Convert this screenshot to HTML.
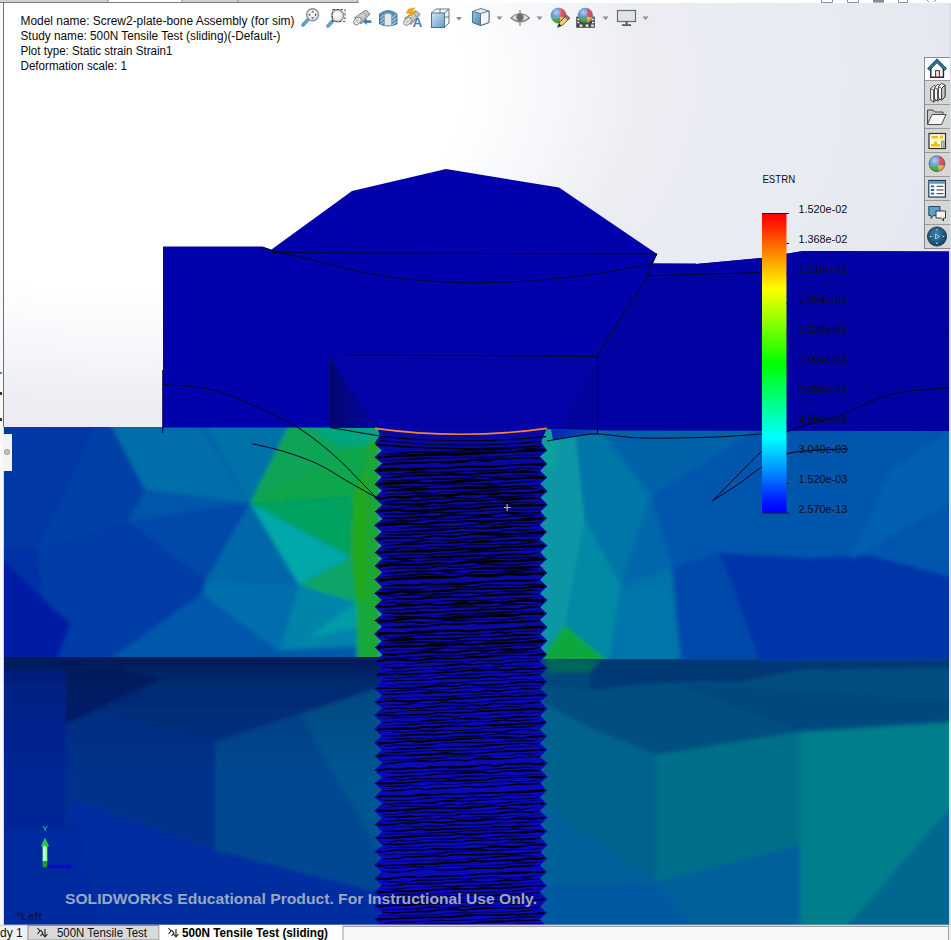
<!DOCTYPE html>
<html lang="en">
<head>
<meta charset="utf-8">
<title>SOLIDWORKS Simulation - Static strain plot</title>
<style>
html,body{margin:0;padding:0;}
body{width:951px;height:940px;overflow:hidden;background:#fff;font-family:"Liberation Sans",sans-serif;position:relative;}
#vp{position:absolute;left:0;top:0;width:951px;height:940px;display:block;}
svg text{font-family:"Liberation Sans",sans-serif;}
</style>
</head>
<body>
<svg id="vp" width="951" height="940" viewBox="0 0 951 940">
<defs>
<radialGradient id="bg" cx="120" cy="80" r="600" gradientUnits="userSpaceOnUse" gradientTransform="translate(120,80) scale(1.6,1) translate(-120,-80)">
<stop offset="0" stop-color="#ffffff"/>
<stop offset="0.35" stop-color="#ffffff"/>
<stop offset="0.45" stop-color="#f6f7fa"/>
<stop offset="0.55" stop-color="#ebedf3"/>
<stop offset="0.62" stop-color="#eaecf3"/>
<stop offset="0.83" stop-color="#e7e9f1"/>
<stop offset="1" stop-color="#e2e5ee"/>
</radialGradient>
<linearGradient id="gShade" x1="0" y1="657" x2="0" y2="830" gradientUnits="userSpaceOnUse"><stop offset="0" stop-color="#000018" stop-opacity="0.3"/><stop offset="0.2" stop-color="#000018" stop-opacity="0.13"/><stop offset="0.7" stop-color="#000018" stop-opacity="0"/><stop offset="1" stop-color="#000018" stop-opacity="0"/></linearGradient>
<filter id="soft" x="-5%" y="-5%" width="110%" height="110%"><feGaussianBlur stdDeviation="2"/></filter>
<filter id="soft2" x="-5%" y="-5%" width="110%" height="110%"><feGaussianBlur stdDeviation="2.5"/></filter>
<clipPath id="cUL"><rect x="3.6" y="427" width="382" height="231"/></clipPath>
<clipPath id="cUR"><rect x="536" y="429" width="413" height="232"/></clipPath>
<clipPath id="cLL"><rect x="3.6" y="657" width="382" height="268"/></clipPath>
<clipPath id="cLR"><rect x="536" y="659" width="413" height="266"/></clipPath>
</defs>
<rect x="0" y="0" width="951" height="940" fill="#ffffff"/>
<rect x="4" y="3" width="945" height="922" fill="url(#bg)"/>
<g clip-path="url(#cUL)"><g filter="url(#soft)">
<rect x="-5" y="420" width="400" height="245" fill="rgb(0,66,167)"/>
<polygon points="0.0,425.0 96.0,425.0 38.0,548.0 0.0,548.0" fill="rgb(0,56,164)" />
<polygon points="96.0,425.0 111.0,425.0 145.0,490.0 128.0,521.0 38.0,548.0" fill="rgb(0,64,167)" />
<polygon points="111.0,425.0 199.0,425.0 250.0,503.0 145.0,490.0" fill="rgb(0,110,168)" />
<polygon points="199.0,425.0 289.0,425.0 250.0,503.0" fill="rgb(0,114,168)" />
<polygon points="199.0,425.0 206.0,425.0 250.0,503.0 247.0,500.0" fill="rgb(0,98,170)" />
<polygon points="145.0,490.0 250.0,503.0 128.0,521.0" fill="rgb(0,86,170)" />
<polygon points="128.0,521.0 250.0,503.0 206.0,580.0" fill="rgb(0,72,168)" />
<polygon points="128.0,521.0 206.0,580.0 202.0,594.0 38.0,548.0" fill="rgb(0,62,166)" />
<polygon points="0.0,548.0 38.0,548.0 42.0,597.0 71.0,624.0 0.0,557.0" fill="rgb(0,48,165)" />
<polygon points="0.0,557.0 71.0,624.0 57.0,660.0 0.0,660.0" fill="rgb(2,30,165)" />
<polygon points="38.0,548.0 202.0,594.0 109.0,660.0 57.0,660.0 71.0,624.0 42.0,597.0" fill="rgb(0,60,166)" />
<polygon points="109.0,660.0 202.0,594.0 280.0,652.0 280.0,660.0" fill="rgb(0,88,172)" />
<polygon points="250.0,503.0 299.0,585.0 206.0,580.0" fill="rgb(0,104,170)" />
<polygon points="206.0,580.0 299.0,585.0 280.0,652.0 202.0,594.0" fill="rgb(0,110,172)" />
<polygon points="250.0,503.0 351.0,557.0 299.0,585.0" fill="rgb(6,168,170)" />
<polygon points="250.0,503.0 353.0,496.0 351.0,557.0" fill="rgb(6,162,94)" />
<polygon points="299.0,585.0 351.0,557.0 357.0,660.0 280.0,652.0" fill="rgb(2,140,170)" />
<polygon points="299.0,585.0 356.0,600.0 357.0,660.0 280.0,652.0" fill="rgb(2,132,170)" />
<polygon points="299.0,585.0 351.0,557.0 356.7,603.0" fill="rgb(10,164,104)" />
<polygon points="309.0,637.0 355.6,603.0 356.7,628.0" fill="rgb(4,156,168)" />
<polygon points="280.0,650.0 357.0,646.0 357.0,660.0 280.0,660.0" fill="rgb(0,90,170)" />
<polygon points="289.0,425.0 335.0,425.0 368.0,441.0 364.0,470.0 353.0,496.0 250.0,503.0" fill="rgb(12,166,76)" />
<polygon points="289.0,425.0 357.0,445.0 250.0,503.0" fill="rgb(8,164,88)" />
<polygon points="304.0,425.0 375.0,425.0 375.0,446.0 340.0,447.0" fill="rgb(6,166,124)" />
<polygon points="335.0,425.0 385.0,425.0 385.0,440.0 357.0,445.0" fill="rgb(6,166,128)" />
<polygon points="368.0,441.0 385.0,440.0 385.0,660.0 357.0,660.0 356.0,600.0 351.0,557.0 353.0,496.0 364.0,470.0" fill="rgb(36,168,26)" />
<polygon points="357.0,600.0 385.0,600.0 385.0,660.0 357.0,660.0" fill="rgb(24,168,60)" />
<polygon points="366.0,445.0 385.0,440.0 385.0,660.0 368.0,660.0" fill="rgb(30,166,56)" />
</g></g>
<g clip-path="url(#cUR)"><g filter="url(#soft)">
<rect x="522" y="425" width="440" height="240" fill="rgb(0,86,172)"/>
<polygon points="597.0,427.0 760.0,427.0 651.0,495.0" fill="rgb(0,100,170)" />
<polygon points="651.0,495.0 760.0,427.0 955.0,427.0 955.0,545.0 869.0,555.0 811.0,558.0 720.0,553.0 672.0,569.0" fill="rgb(0,86,172)" />
<polygon points="672.0,569.0 720.0,553.0 811.0,558.0 869.0,555.0 955.0,578.0 955.0,662.0 681.0,662.0" fill="rgb(0,54,170)" />
<polygon points="955.0,427.0 955.0,500.0 850.0,560.0 890.0,470.0" fill="rgb(2,94,176)" />
<polygon points="651.0,495.0 672.0,569.0 621.0,586.0" fill="rgb(0,104,170)" />
<polygon points="621.0,586.0 672.0,569.0 681.0,662.0 609.0,662.0" fill="rgb(0,116,170)" />
<polygon points="672.0,569.0 720.0,553.0 760.0,662.0 681.0,662.0" fill="rgb(0,74,170)" />
<polygon points="575.0,427.0 597.0,427.0 651.0,495.0 621.0,586.0 585.0,540.0 585.0,520.0" fill="rgb(0,116,168)" />
<polygon points="585.0,520.0 621.0,586.0 609.0,662.0 565.0,625.0" fill="rgb(2,138,166)" />
<polygon points="538.0,427.0 575.0,427.0 585.0,520.0 565.0,625.0 538.0,662.0" fill="rgb(8,150,166)" />
<polygon points="565.0,625.0 538.0,662.0 609.0,662.0" fill="rgb(14,168,62)" />
<polygon points="538.0,427.0 560.0,427.0 556.0,470.0 538.0,470.0" fill="rgb(10,160,156)" />
</g></g>
<g clip-path="url(#cLL)"><g filter="url(#soft)">
<rect x="-5" y="650" width="400" height="285" fill="rgb(0,48,146)"/>
<polygon points="0.0,650.0 66.0,650.0 66.0,830.0 0.0,935.0" fill="rgb(0,38,150)" />
<polygon points="66.0,650.0 390.0,650.0 390.0,684.0 215.0,742.0 66.0,700.0" fill="rgb(0,50,130)" />
<polygon points="66.0,700.0 215.0,742.0 215.0,850.0 75.0,800.0" fill="rgb(0,50,140)" />
<polygon points="215.0,742.0 390.0,684.0 390.0,895.0 215.0,850.0" fill="rgb(0,72,146)" />
<polygon points="300.0,715.0 390.0,684.0 390.0,870.0" fill="rgb(0,86,146)" />
<polygon points="215.0,850.0 390.0,895.0 390.0,935.0 100.0,935.0 75.0,800.0" fill="rgb(0,46,160)" />
<polygon points="0.0,830.0 66.0,830.0 75.0,800.0 100.0,935.0 0.0,935.0" fill="rgb(0,42,160)" />
<polygon points="-5.0,650.0 395.0,650.0 395.0,672.0 -5.0,670.0" fill="rgb(0,42,120)" />
<polygon points="66.0,660.0 164.0,678.0 66.0,724.0" fill="rgb(0,34,112)" />
<rect x="0" y="655" width="395" height="180" fill="url(#gShade)"/>
</g></g>
<g clip-path="url(#cLR)"><g filter="url(#soft)">
<rect x="522" y="650" width="440" height="285" fill="rgb(0,102,140)"/>
<polygon points="535.0,650.0 955.0,650.0 955.0,722.0 800.0,732.0 656.0,755.0 590.0,728.0 535.0,700.0" fill="rgb(0,80,128)" />
<polygon points="669.0,682.0 955.0,700.0 955.0,722.0 800.0,732.0" fill="rgb(0,72,126)" />
<polygon points="591.0,659.0 955.0,659.0 955.0,668.0 800.0,670.0 740.0,682.0 669.0,682.0 591.0,690.0" fill="rgb(0,56,118)" />
<polygon points="535.0,659.0 591.0,659.0 591.0,690.0 535.0,684.0" fill="rgb(0,70,122)" />
<polygon points="535.0,700.0 590.0,728.0 656.0,755.0 656.0,880.0 535.0,800.0" fill="rgb(0,100,142)" />
<polygon points="656.0,755.0 800.0,732.0 800.0,845.0 656.0,882.0" fill="rgb(0,112,138)" />
<polygon points="800.0,732.0 955.0,722.0 955.0,803.0 846.0,927.0 800.0,927.0" fill="rgb(0,126,140)" />
<polygon points="955.0,803.0 846.0,927.0 955.0,927.0" fill="rgb(0,104,142)" />
<polygon points="535.0,800.0 656.0,882.0 800.0,845.0 800.0,935.0 535.0,935.0" fill="rgb(0,96,154)" />
<polygon points="535.0,885.0 656.0,882.0 700.0,935.0 535.0,935.0" fill="rgb(0,90,162)" />
<polygon points="547.0,659.0 600.0,661.0 590.0,672.0 547.0,672.0" fill="rgb(4,104,84)" />
</g></g>
<circle cx="379.8" cy="450.4" r="2.3" fill="rgb(24,170,160)" opacity="0.75"/>
<circle cx="379.8" cy="464.0" r="2.3" fill="rgb(24,170,160)" opacity="0.75"/>
<circle cx="542.6" cy="470.8" r="2.2" fill="rgb(40,120,190)" opacity="0.6"/>
<circle cx="379.8" cy="477.6" r="2.3" fill="rgb(24,170,160)" opacity="0.75"/>
<circle cx="542.6" cy="484.4" r="2.2" fill="rgb(40,120,190)" opacity="0.6"/>
<circle cx="379.8" cy="491.2" r="2.3" fill="rgb(24,170,160)" opacity="0.75"/>
<circle cx="379.8" cy="518.4" r="2.3" fill="rgb(24,170,160)" opacity="0.75"/>
<circle cx="542.6" cy="525.2" r="2.2" fill="rgb(40,120,190)" opacity="0.6"/>
<circle cx="379.8" cy="532.0" r="2.3" fill="rgb(24,170,160)" opacity="0.75"/>
<circle cx="379.8" cy="545.6" r="2.3" fill="rgb(24,170,160)" opacity="0.75"/>
<circle cx="379.8" cy="559.2" r="2.3" fill="rgb(24,170,160)" opacity="0.75"/>
<circle cx="542.6" cy="566.0" r="2.2" fill="rgb(40,120,190)" opacity="0.6"/>
<circle cx="379.8" cy="613.6" r="2.3" fill="rgb(24,170,160)" opacity="0.75"/>
<circle cx="379.8" cy="627.2" r="2.3" fill="rgb(24,170,160)" opacity="0.75"/>
<circle cx="542.6" cy="634.0" r="2.2" fill="rgb(40,120,190)" opacity="0.6"/>
<circle cx="379.8" cy="640.8" r="2.3" fill="rgb(24,170,160)" opacity="0.75"/>
<circle cx="542.6" cy="647.6" r="2.2" fill="rgb(40,120,190)" opacity="0.6"/>
<circle cx="379.8" cy="654.4" r="2.3" fill="rgb(24,170,160)" opacity="0.75"/>
<defs><clipPath id="cSc"><rect x="370" y="426" width="182" height="499"/></clipPath><linearGradient id="gSc" x1="0" y1="428" x2="0" y2="925" gradientUnits="userSpaceOnUse"><stop offset="0" stop-color="rgb(8,8,160)"/><stop offset="0.45" stop-color="rgb(10,10,170)"/><stop offset="0.5" stop-color="rgb(10,10,180)"/><stop offset="1" stop-color="rgb(10,10,188)"/></linearGradient></defs>
<g clip-path="url(#cSc)">
<polygon points="378.0,428.0 379.5,436.0 374.4,443.6 381.8,450.6 374.6,457.2 382.0,463.3 374.1,470.8 381.5,476.9 374.5,484.4 381.9,490.6 374.7,498.0 382.1,504.9 375.1,511.6 382.5,519.0 374.2,525.2 381.6,531.7 374.3,538.8 381.7,545.8 374.6,552.4 382.0,558.5 374.8,566.0 382.2,572.5 374.6,579.6 382.0,586.9 374.3,593.2 381.7,600.0 374.8,606.8 382.2,614.4 374.5,620.4 381.9,626.6 374.1,634.0 381.5,641.2 375.0,647.6 382.4,654.7 374.7,661.2 382.1,668.5 374.6,674.8 382.0,680.9 374.7,688.4 382.1,695.7 374.5,702.0 381.9,708.0 374.3,715.6 381.7,721.7 374.2,729.2 381.6,735.8 374.2,742.8 381.6,749.7 374.9,756.4 382.3,762.8 374.5,770.0 381.9,777.5 374.3,783.6 381.7,790.0 374.7,797.2 382.1,803.2 374.5,810.8 381.9,818.3 374.6,824.4 382.0,831.5 375.0,838.0 382.4,845.4 374.5,851.6 381.9,857.8 374.2,865.2 381.6,871.5 374.4,878.8 381.8,884.8 374.2,892.4 381.6,898.4 374.7,906.0 382.1,912.4 374.5,919.6 381.9,927.0 374.6,933.2 382.0,939.3 374.4,946.8 381.8,954.1 540.0,959.9 547.1,953.6 540.2,946.2 547.3,940.0 539.8,934.0 546.9,926.4 539.8,919.4 546.9,912.8 540.1,906.6 547.2,899.2 539.8,891.8 546.9,885.6 539.8,878.3 546.9,872.0 540.1,865.4 547.2,858.4 540.5,852.1 547.6,844.8 540.3,837.3 547.4,831.2 540.3,824.7 547.4,817.6 540.0,810.7 547.1,804.0 539.9,797.2 547.0,790.4 540.6,783.0 547.7,776.8 540.6,769.9 547.7,763.2 540.1,757.0 547.2,749.6 539.9,743.4 547.0,736.0 539.8,729.6 546.9,722.4 540.4,715.5 547.5,708.8 540.7,701.7 547.8,695.2 540.4,688.7 547.5,681.6 540.2,675.5 547.3,668.0 540.0,661.4 547.1,654.4 540.4,647.7 547.5,640.8 540.5,634.0 547.6,627.2 540.0,619.8 547.1,613.6 540.3,607.4 547.4,600.0 540.0,593.5 547.1,586.4 540.1,579.7 547.2,572.8 539.8,565.5 546.9,559.2 540.3,552.2 547.4,545.6 539.8,539.3 546.9,532.0 539.7,524.9 546.8,518.4 540.6,511.4 547.7,504.8 540.5,497.6 547.6,491.2 540.1,483.7 547.2,477.6 540.1,470.8 547.2,464.0 539.9,456.5 547.0,450.4 541.0,442.0 547.0,428.0" fill="url(#gSc)" />


<polygon points="383.0,454.2 401.9,452.4 414.2,451.0 432.9,451.6 452.3,450.8 471.2,448.8 482.4,448.6 491.8,449.7 501.2,447.9 510.3,448.7 519.5,447.3 534.1,447.9 539.2,446.7 539.2,447.4 534.1,449.3 519.5,448.2 510.3,449.7 501.2,450.0 491.8,451.0 482.4,450.5 471.2,450.7 452.3,452.2 432.9,453.5 414.2,452.7 401.9,454.3 383.0,454.7" fill="rgb(0,0,36)" />
<polygon points="377.6,456.8 396.8,454.9 411.9,454.0 422.9,453.8 436.6,452.5 444.8,453.0 451.5,452.7 470.6,451.7 485.5,451.6 498.9,451.6 517.5,450.6 529.7,448.7 544.3,448.8 544.3,451.3 529.7,451.9 517.5,452.6 498.9,453.3 485.5,454.3 470.6,455.1 451.5,456.1 444.8,455.5 436.6,455.9 422.9,456.2 411.9,456.8 396.8,457.1 377.6,458.8" fill="rgb(0,0,8)" />
<polygon points="374.3,457.2 380.6,455.7 380.6,458.6" fill="rgb(0,0,8)" />
<polygon points="547.6,450.4 541.3,449.0 541.3,451.9" fill="rgb(0,0,8)" />
<polygon points="382.0,464.0 397.9,462.1 411.7,461.8 422.4,461.7 435.6,460.9 449.4,460.9 466.1,459.9 473.9,458.8 487.7,459.3 497.4,458.1 507.5,458.3 524.1,457.3 537.2,457.5 540.2,458.2 540.2,458.7 537.2,458.9 524.1,458.6 507.5,459.6 497.4,459.5 487.7,462.0 473.9,461.1 466.1,462.8 449.4,463.4 435.6,463.0 422.4,463.8 411.7,463.9 397.9,464.4 382.0,465.0" fill="rgb(0,0,14)" />
<polygon points="383.0,460.2 398.1,459.2 406.4,458.5 424.4,457.3 443.5,457.7 452.9,456.7 471.7,456.7 483.4,456.6 496.2,456.6 515.6,454.6 532.9,454.8 539.2,453.5 539.2,454.0 532.9,455.6 515.6,455.3 496.2,457.4 483.4,458.5 471.7,457.5 452.9,458.4 443.5,458.5 424.4,458.9 406.4,460.2 398.1,460.2 383.0,460.7" fill="rgb(0,0,36)" />
<polygon points="377.6,468.4 394.7,467.7 404.6,468.5 413.1,467.8 431.5,467.3 445.4,467.1 461.0,465.9 468.7,465.4 475.9,465.5 491.4,465.7 503.4,464.9 510.9,464.5 529.5,463.6 544.3,463.3 544.3,462.4 544.3,465.0 544.3,466.0 529.5,465.2 510.9,466.1 503.4,466.8 491.4,467.9 475.9,467.7 468.7,467.4 461.0,467.8 445.4,469.2 431.5,469.2 413.1,471.2 404.6,470.8 394.7,471.0 377.6,471.7" fill="rgb(0,0,8)" />
<polygon points="374.3,470.8 380.6,469.3 380.6,472.2" fill="rgb(0,0,8)" />
<polygon points="547.6,464.0 541.3,462.6 541.3,465.5" fill="rgb(0,0,8)" />
<polygon points="382.0,477.6 400.7,475.8 408.5,475.0 425.7,473.8 437.8,474.2 450.7,472.8 468.1,473.7 479.7,472.5 492.8,471.9 508.2,471.0 527.5,470.0 538.4,471.8 540.2,470.4 540.2,471.4 538.4,472.8 527.5,472.9 508.2,473.0 492.8,473.9 479.7,474.2 468.1,476.1 450.7,475.5 437.8,475.7 425.7,476.4 408.5,476.5 400.7,477.6 382.0,478.4" fill="rgb(0,0,14)" />
<polygon points="383.0,473.9 394.1,473.2 400.6,473.5 412.1,471.7 424.8,471.0 437.8,471.9 446.9,471.3 460.0,470.5 466.6,471.0 476.5,469.8 484.2,469.9 495.9,469.6 502.9,469.3 509.7,469.0 520.1,467.5 529.7,467.7 539.2,468.4 539.2,468.9 529.7,468.6 520.1,468.4 509.7,470.1 502.9,471.0 495.9,471.1 484.2,471.8 476.5,471.3 466.6,471.9 460.0,472.3 446.9,473.3 437.8,472.7 424.8,472.8 412.1,473.8 400.6,474.8 394.1,474.9 383.0,474.6" fill="rgb(0,0,36)" />
<polygon points="383.0,480.0 397.6,480.3 413.0,479.2 425.9,478.7 432.4,478.2 449.3,478.1 465.5,477.6 478.5,476.1 492.0,476.6 507.1,475.9 514.4,474.5 530.5,474.7 539.2,475.0 539.2,475.4 530.5,476.3 514.4,475.6 507.1,476.6 492.0,477.7 478.5,477.1 465.5,478.4 449.3,479.7 432.4,479.9 425.9,479.9 413.0,481.3 397.6,481.3 383.0,480.4" fill="rgb(0,0,36)" />
<polygon points="377.6,483.2 390.8,481.6 403.4,481.5 415.9,480.9 424.0,482.5 442.1,481.1 451.2,480.7 470.4,478.6 489.1,479.2 495.8,477.6 508.2,478.1 525.4,476.8 544.3,475.9 544.3,479.1 525.4,479.1 508.2,480.3 495.8,480.1 489.1,480.8 470.4,482.0 451.2,483.7 442.1,483.7 424.0,484.3 415.9,483.6 403.4,484.2 390.8,485.1 377.6,485.4" fill="rgb(0,0,8)" />
<polygon points="374.3,484.4 380.6,482.9 380.6,485.8" fill="rgb(0,0,8)" />
<polygon points="547.6,477.6 541.3,476.2 541.3,479.1" fill="rgb(0,0,8)" />
<polygon points="382.0,490.6 388.5,490.0 404.8,488.2 422.2,487.8 430.3,488.0 448.8,487.8 464.6,486.3 482.8,486.6 493.1,485.6 504.4,486.1 516.0,485.7 535.5,484.9 540.2,485.0 540.2,485.8 535.5,486.3 516.0,487.0 504.4,488.3 493.1,488.5 482.8,489.3 464.6,489.2 448.8,489.4 430.3,489.7 422.2,490.7 404.8,490.9 388.5,491.1 382.0,491.3" fill="rgb(0,0,14)" />
<polygon points="383.0,487.0 390.1,486.1 408.7,486.3 416.8,486.1 429.5,485.4 440.4,484.6 450.8,484.4 466.9,483.5 486.1,482.8 496.0,483.1 511.0,481.9 521.4,481.5 535.2,480.7 539.2,482.3 539.2,482.6 535.2,481.4 521.4,482.7 511.0,483.3 496.0,484.5 486.1,484.9 466.9,484.6 450.8,485.3 440.4,485.4 429.5,486.3 416.8,488.3 408.7,487.3 390.1,487.9 383.0,487.4" fill="rgb(0,0,36)" />
<polygon points="383.0,495.1 397.7,493.8 415.4,492.1 424.7,492.6 434.7,492.9 444.5,491.0 456.2,490.9 468.5,491.1 487.4,489.8 504.9,489.0 522.7,487.3 529.5,487.3 536.4,488.5 539.2,487.6 539.2,488.0 536.4,489.1 529.5,489.4 522.7,489.2 504.9,490.5 487.4,491.7 468.5,492.9 456.2,492.6 444.5,491.9 434.7,493.9 424.7,494.5 415.4,494.2 397.7,494.5 383.0,495.6" fill="rgb(0,0,36)" />
<polygon points="377.6,497.4 392.4,495.9 408.0,496.1 415.9,495.3 423.3,494.7 436.6,494.5 450.7,493.7 462.3,493.3 471.7,492.8 486.0,493.1 492.6,492.5 503.0,492.1 515.5,492.3 534.5,491.4 544.3,489.4 544.3,492.5 534.5,493.4 515.5,494.5 503.0,494.1 492.6,495.5 486.0,495.1 471.7,495.2 462.3,495.0 450.7,497.1 436.6,496.6 423.3,497.7 415.9,497.0 408.0,499.1 392.4,498.0 377.6,500.0" fill="rgb(0,0,8)" />
<polygon points="374.3,498.0 380.6,496.5 380.6,499.4" fill="rgb(0,0,8)" />
<polygon points="547.6,491.2 541.3,489.8 541.3,492.7" fill="rgb(0,0,8)" />
<polygon points="382.0,503.8 392.3,502.8 411.2,503.1 424.2,502.6 433.1,501.7 442.5,501.9 454.4,499.9 469.6,500.2 488.4,499.6 496.8,498.5 508.4,498.1 517.7,497.3 536.8,497.6 540.2,498.7 540.2,499.6 536.8,498.7 517.7,500.2 508.4,501.0 496.8,500.2 488.4,501.1 469.6,502.1 454.4,502.3 442.5,504.5 433.1,503.2 424.2,505.5 411.2,505.6 392.3,505.6 382.0,504.2" fill="rgb(0,0,14)" />
<polygon points="383.0,502.0 390.1,500.7 402.8,499.8 414.1,500.2 432.6,498.1 441.6,498.2 452.8,496.8 471.0,497.9 477.9,498.1 489.7,496.0 506.8,496.3 523.3,495.1 530.3,494.8 537.2,495.9 539.2,495.5 539.2,496.1 537.2,496.3 530.3,496.2 523.3,496.2 506.8,498.4 489.7,497.4 477.9,498.8 471.0,499.5 452.8,498.7 441.6,499.3 432.6,499.9 414.1,501.8 402.8,500.9 390.1,502.4 383.0,502.3" fill="rgb(0,0,36)" />
<polygon points="383.0,508.7 399.5,507.9 413.9,505.8 424.7,505.7 435.4,505.5 446.6,504.7 463.2,504.4 470.8,504.5 479.8,502.7 496.1,502.6 505.8,502.2 513.2,502.0 520.1,501.9 533.8,502.4 539.2,501.5 539.2,502.0 533.8,503.5 520.1,502.8 513.2,503.1 505.8,504.0 496.1,504.2 479.8,504.7 470.8,506.2 463.2,506.3 446.6,506.4 435.4,506.6 424.7,507.4 413.9,506.7 399.5,509.0 383.0,509.4" fill="rgb(0,0,36)" />
<polygon points="377.6,509.7 397.0,509.2 410.1,509.8 419.6,509.5 436.6,508.7 451.6,506.7 471.0,507.8 478.8,506.4 491.5,505.4 508.6,504.8 526.1,503.9 544.3,504.3 544.3,506.3 526.1,506.7 508.6,506.8 491.5,507.8 478.8,509.2 471.0,509.6 451.6,509.8 436.6,511.2 419.6,511.9 410.1,512.6 397.0,511.1 377.6,511.9" fill="rgb(0,0,8)" />
<polygon points="374.3,511.6 380.6,510.1 380.6,513.0" fill="rgb(0,0,8)" />
<polygon points="547.6,504.8 541.3,503.4 541.3,506.3" fill="rgb(0,0,8)" />
<polygon points="382.0,518.4 388.6,517.0 399.4,517.6 414.7,516.3 423.6,515.2 434.2,516.3 443.3,514.2 460.2,514.2 473.8,514.5 481.1,514.1 488.9,513.9 500.6,512.5 514.2,512.1 529.0,512.7 536.7,512.0 540.2,511.9 540.2,512.4 536.7,513.1 529.0,514.0 514.2,514.5 500.6,513.7 488.9,515.9 481.1,516.0 473.8,516.5 460.2,515.4 443.3,516.7 434.2,518.2 423.6,518.0 414.7,518.2 399.4,519.4 388.6,518.5 382.0,519.1" fill="rgb(0,0,14)" />
<polygon points="383.0,513.8 396.3,513.2 414.8,513.0 422.7,511.9 435.6,511.8 452.6,511.9 471.6,510.4 480.7,510.2 488.8,510.2 507.6,508.7 526.8,509.7 539.2,508.6 539.2,509.3 526.8,510.4 507.6,510.5 488.8,511.1 480.7,511.7 471.6,511.5 452.6,513.9 435.6,513.1 422.7,513.8 414.8,514.9 396.3,515.3 383.0,514.6" fill="rgb(0,0,36)" />
<polygon points="383.0,521.8 400.4,519.7 408.4,520.6 422.7,519.0 436.4,518.5 451.0,518.6 461.5,517.9 473.5,516.6 487.5,516.0 499.6,517.0 514.6,515.1 526.9,514.8 539.1,514.6 539.2,516.2 539.2,516.9 539.1,515.3 526.9,517.0 514.6,516.5 499.6,518.4 487.5,517.8 473.5,518.2 461.5,519.3 451.0,519.4 436.4,519.4 422.7,520.4 408.4,522.0 400.4,521.6 383.0,522.3" fill="rgb(0,0,36)" />
<polygon points="377.6,522.9 394.7,522.5 403.7,522.2 423.0,523.2 435.9,521.2 454.8,521.0 473.2,519.9 481.9,520.4 498.6,520.2 517.2,519.3 524.6,518.0 535.6,517.1 544.3,517.4 544.3,520.1 535.6,520.4 524.6,520.9 517.2,521.1 498.6,522.1 481.9,523.4 473.2,521.8 454.8,522.7 435.9,523.8 423.0,525.2 403.7,524.8 394.7,525.7 377.6,526.3" fill="rgb(0,0,8)" />
<polygon points="374.3,525.2 380.6,523.7 380.6,526.6" fill="rgb(0,0,8)" />
<polygon points="547.6,518.4 541.3,517.0 541.3,519.9" fill="rgb(0,0,8)" />
<polygon points="382.0,531.6 400.0,531.1 407.8,530.7 427.2,529.0 441.9,528.6 453.6,528.2 470.4,526.9 480.4,527.3 499.7,526.0 513.7,525.3 524.9,526.0 540.2,524.6 540.2,525.2 524.9,527.3 513.7,527.0 499.7,528.8 480.4,529.3 470.4,528.4 453.6,529.4 441.9,531.0 427.2,532.0 407.8,532.4 400.0,532.4 382.0,532.2" fill="rgb(0,0,14)" />
<polygon points="383.0,528.9 394.1,527.4 403.6,527.3 417.6,526.1 431.8,525.5 441.0,526.2 455.6,526.1 468.2,524.6 476.5,524.1 495.2,524.3 504.8,522.8 513.3,522.3 521.0,522.6 535.8,522.3 539.2,521.7 539.2,522.1 535.8,523.4 521.0,524.1 513.3,523.3 504.8,525.0 495.2,525.0 476.5,524.8 468.2,526.0 455.6,526.9 441.0,527.3 431.8,527.6 417.6,527.8 403.6,528.8 394.1,528.1 383.0,529.3" fill="rgb(0,0,36)" />
<polygon points="383.0,534.8 390.1,534.0 408.2,533.8 424.9,533.6 440.7,532.5 447.3,532.6 464.7,530.9 480.9,531.9 493.5,531.4 509.6,529.5 522.0,529.3 531.4,529.5 539.2,529.7 539.2,530.1 531.4,530.5 522.0,531.4 509.6,530.5 493.5,532.1 480.9,532.9 464.7,532.6 447.3,534.1 440.7,533.9 424.9,534.7 408.2,535.7 390.1,535.6 383.0,535.1" fill="rgb(0,0,36)" />
<polygon points="377.6,537.8 387.2,537.1 405.5,537.0 420.2,536.9 435.7,534.8 450.9,535.5 470.1,533.7 482.7,532.3 500.1,532.7 515.7,532.9 533.3,531.7 544.3,531.2 544.3,534.4 533.3,534.0 515.7,534.7 500.1,535.7 482.7,535.3 470.1,535.3 450.9,537.8 435.7,536.6 420.2,538.8 405.5,538.8 387.2,539.1 377.6,540.6" fill="rgb(0,0,8)" />
<polygon points="374.3,538.8 380.6,537.3 380.6,540.2" fill="rgb(0,0,8)" />
<polygon points="547.6,532.0 541.3,530.6 541.3,533.5" fill="rgb(0,0,8)" />
<polygon points="382.0,545.8 400.1,543.8 407.4,542.6 425.2,542.5 443.6,542.4 462.4,541.1 470.3,541.6 479.5,540.0 487.4,540.1 494.4,540.8 511.9,539.3 528.9,539.4 540.2,539.4 540.2,540.1 528.9,541.2 511.9,541.3 494.4,542.0 487.4,542.8 479.5,542.9 470.3,543.4 462.4,542.9 443.6,543.7 425.2,544.3 407.4,545.2 400.1,545.2 382.0,546.6" fill="rgb(0,0,14)" />
<polygon points="383.0,542.0 400.7,541.6 408.4,541.4 425.5,539.1 434.3,539.7 440.8,539.8 449.9,539.2 466.3,538.6 485.5,537.3 492.1,536.7 505.0,535.6 517.9,535.5 534.7,535.1 539.2,535.8 539.2,536.3 534.7,536.5 517.9,536.5 505.0,537.7 492.1,538.7 485.5,538.6 466.3,540.3 449.9,541.0 440.8,540.6 434.3,540.6 425.5,540.9 408.4,542.6 400.7,542.6 383.0,542.4" fill="rgb(0,0,36)" />
<polygon points="383.0,548.2 392.5,548.3 405.0,546.8 418.4,547.8 434.7,545.8 451.0,545.7 465.9,544.6 477.0,544.3 487.7,544.4 496.2,543.7 513.7,543.8 528.8,541.5 539.2,541.9 539.2,542.4 528.8,543.6 513.7,545.6 496.2,544.7 487.7,545.4 477.0,545.4 465.9,545.6 451.0,547.7 434.7,547.0 418.4,548.8 405.0,548.2 392.5,549.9 383.0,548.6" fill="rgb(0,0,36)" />
<polygon points="377.6,551.0 396.9,550.6 413.7,550.0 429.8,549.1 441.9,548.4 451.0,548.7 465.8,546.9 473.6,547.7 482.8,547.0 494.4,546.7 501.3,546.3 513.0,546.4 529.8,544.7 544.3,544.8 544.3,547.6 529.8,547.8 513.0,548.2 501.3,548.6 494.4,549.6 482.8,550.3 473.6,550.9 465.8,550.0 451.0,551.2 441.9,551.1 429.8,552.5 413.7,552.4 396.9,552.5 377.6,553.8" fill="rgb(0,0,8)" />
<polygon points="374.3,552.4 380.6,550.9 380.6,553.8" fill="rgb(0,0,8)" />
<polygon points="547.6,545.6 541.3,544.2 541.3,547.1" fill="rgb(0,0,8)" />
<polygon points="382.0,559.8 391.8,558.1 403.8,557.4 416.2,557.2 430.8,556.3 442.6,556.1 457.9,555.1 476.4,554.6 485.3,555.1 500.3,553.9 517.0,553.6 528.5,553.4 540.2,551.9 540.2,552.5 528.5,555.2 517.0,555.1 500.3,555.8 485.3,556.7 476.4,556.5 457.9,557.8 442.6,558.3 430.8,558.5 416.2,558.6 403.8,560.3 391.8,559.6 382.0,560.3" fill="rgb(0,0,14)" />
<polygon points="383.0,555.1 389.7,555.2 401.6,554.6 413.6,554.2 429.2,554.2 440.2,552.8 450.2,553.0 459.6,551.7 475.7,550.5 494.5,550.2 507.8,549.8 517.2,549.4 534.1,549.0 539.2,549.9 539.2,550.2 534.1,549.5 517.2,550.7 507.8,551.1 494.5,552.1 475.7,552.4 459.6,553.2 450.2,554.4 440.2,554.8 429.2,555.4 413.6,555.2 401.6,556.0 389.7,556.8 383.0,555.4" fill="rgb(0,0,36)" />
<polygon points="383.0,561.6 393.4,562.1 406.2,559.7 418.2,561.0 433.0,559.5 448.1,558.6 459.3,558.9 477.9,558.6 495.5,556.6 502.7,557.1 520.0,556.5 538.3,556.6 539.2,555.6 539.2,556.2 538.3,557.4 520.0,558.5 502.7,559.0 495.5,558.6 477.9,560.5 459.3,559.8 448.1,560.5 433.0,560.4 418.2,562.0 406.2,561.9 393.4,562.8 383.0,562.3" fill="rgb(0,0,36)" />
<polygon points="377.6,564.4 391.0,562.9 407.1,563.4 419.3,563.0 437.3,562.2 451.0,563.1 461.0,561.5 470.5,560.1 478.8,560.6 491.7,559.4 499.0,560.0 511.6,560.6 520.0,559.4 532.8,557.9 544.3,557.9 544.3,560.5 532.8,561.3 520.0,562.2 511.6,562.3 499.0,562.5 491.7,563.0 478.8,564.1 470.5,562.9 461.0,564.4 451.0,564.8 437.3,564.6 419.3,566.3 407.1,566.1 391.0,566.2 377.6,567.7" fill="rgb(0,0,8)" />
<polygon points="374.3,566.0 380.6,564.5 380.6,567.4" fill="rgb(0,0,8)" />
<polygon points="547.6,559.2 541.3,557.8 541.3,560.7" fill="rgb(0,0,8)" />
<polygon points="382.0,573.2 395.3,571.9 411.8,570.4 421.1,570.2 433.2,570.7 445.2,569.3 458.9,569.2 476.2,568.1 486.5,566.7 503.8,567.0 515.5,566.6 528.6,566.1 538.6,566.3 540.2,566.3 540.2,567.2 538.6,567.4 528.6,568.4 515.5,569.5 503.8,569.4 486.5,569.6 476.2,569.3 458.9,570.5 445.2,572.1 433.2,571.9 421.1,572.6 411.8,572.2 395.3,573.7 382.0,574.1" fill="rgb(0,0,14)" />
<polygon points="383.0,569.3 398.2,567.8 410.6,567.3 427.0,566.9 434.9,565.8 443.7,565.7 450.7,566.5 467.3,566.2 485.6,563.8 500.7,563.9 512.0,564.5 529.2,563.1 539.2,563.3 539.2,563.7 529.2,563.9 512.0,565.9 500.7,566.0 485.6,565.1 467.3,567.5 450.7,568.1 443.7,566.6 434.9,567.3 427.0,569.0 410.6,568.7 398.2,569.1 383.0,569.7" fill="rgb(0,0,36)" />
<polygon points="383.0,576.2 389.7,576.0 396.3,575.0 411.7,574.0 419.7,573.2 438.8,574.0 446.4,572.0 464.2,573.2 472.4,571.4 479.2,570.8 495.0,571.4 504.7,570.4 520.7,569.8 529.6,568.8 536.8,569.5 539.2,570.1 539.2,570.5 536.8,570.3 529.6,570.7 520.7,571.5 504.7,572.0 495.0,572.2 479.2,572.8 472.4,573.2 464.2,574.0 446.4,573.7 438.8,574.8 419.7,575.4 411.7,576.1 396.3,576.8 389.7,576.7 383.0,576.9" fill="rgb(0,0,36)" />
<polygon points="377.6,578.8 389.1,578.2 405.8,576.7 424.6,576.0 441.3,575.6 455.2,576.0 465.5,574.2 472.8,574.3 491.9,574.0 507.6,572.0 524.8,572.7 535.7,572.4 544.3,572.1 544.3,575.3 535.7,574.6 524.8,576.0 507.6,575.3 491.9,577.4 472.8,577.1 465.5,576.3 455.2,578.2 441.3,579.0 424.6,579.0 405.8,580.0 389.1,580.4 377.6,582.1" fill="rgb(0,0,8)" />
<polygon points="374.3,579.6 380.6,578.1 380.6,581.0" fill="rgb(0,0,8)" />
<polygon points="547.6,572.8 541.3,571.4 541.3,574.3" fill="rgb(0,0,8)" />
<polygon points="382.0,586.1 397.4,584.1 415.8,584.6 426.8,582.6 434.4,584.0 448.1,582.5 465.0,582.8 474.1,581.6 490.3,580.8 508.9,579.6 518.5,579.7 532.9,579.4 540.2,579.3 540.2,579.8 532.9,581.2 518.5,581.9 508.9,582.1 490.3,582.3 474.1,583.9 465.0,584.9 448.1,585.3 434.4,585.6 426.8,585.2 415.8,586.6 397.4,586.6 382.0,586.6" fill="rgb(0,0,14)" />
<polygon points="383.0,589.0 390.9,588.4 405.6,588.4 422.3,588.5 430.9,586.6 445.1,586.4 456.1,585.3 469.4,586.4 476.1,585.9 483.1,584.3 502.5,584.5 520.2,584.7 533.0,583.4 539.2,584.2 539.2,584.8 533.0,584.7 520.2,585.8 502.5,585.4 483.1,585.9 476.1,588.0 469.4,587.8 456.1,586.9 445.1,587.2 430.9,587.6 422.3,589.6 405.6,590.4 390.9,590.3 383.0,589.7" fill="rgb(0,0,36)" />
<polygon points="377.6,592.2 389.2,591.2 401.5,590.5 410.1,590.6 429.2,590.4 448.6,589.0 457.9,588.2 464.9,588.4 474.8,588.4 485.8,587.5 504.1,587.7 522.3,586.9 539.7,584.3 544.3,584.4 544.3,587.9 539.7,587.7 522.3,588.9 504.1,589.4 485.8,589.4 474.8,590.3 464.9,590.2 457.9,590.5 448.6,592.1 429.2,592.6 410.1,594.1 401.5,592.4 389.2,594.8 377.6,595.2" fill="rgb(0,0,8)" />
<polygon points="374.3,593.2 380.6,591.7 380.6,594.6" fill="rgb(0,0,8)" />
<polygon points="547.6,586.4 541.3,585.0 541.3,587.9" fill="rgb(0,0,8)" />
<polygon points="382.0,600.0 399.8,598.1 417.8,597.9 426.1,596.2 438.5,596.4 446.2,596.0 464.8,596.5 482.2,594.4 496.9,593.7 509.3,592.8 520.2,592.4 537.4,593.7 540.2,593.4 540.2,594.0 537.4,594.6 520.2,595.2 509.3,595.8 496.9,596.6 482.2,596.5 464.8,598.3 446.2,597.7 438.5,598.3 426.1,599.0 417.8,600.1 399.8,599.5 382.0,600.5" fill="rgb(0,0,14)" />
<polygon points="383.0,595.4 392.1,595.5 403.4,593.9 422.7,594.6 442.2,593.1 460.7,592.3 468.5,592.1 478.8,592.4 496.9,591.2 504.2,590.3 520.1,590.6 530.4,589.5 539.2,590.5 539.2,591.2 530.4,591.1 520.1,591.7 504.2,591.9 496.9,592.0 478.8,594.2 468.5,593.1 460.7,593.8 442.2,595.2 422.7,595.6 403.4,595.9 392.1,596.4 383.0,596.1" fill="rgb(0,0,36)" />
<polygon points="383.0,603.0 392.1,602.1 399.5,602.7 415.5,600.9 427.3,601.5 443.2,600.4 450.4,600.3 467.5,599.5 478.3,599.7 495.8,598.7 513.5,598.3 526.4,597.4 533.1,596.9 539.2,597.0 539.2,597.6 533.1,598.1 526.4,599.5 513.5,599.1 495.8,600.0 478.3,600.9 467.5,601.4 450.4,601.2 443.2,601.7 427.3,602.2 415.5,602.1 399.5,604.0 392.1,603.1 383.0,603.7" fill="rgb(0,0,36)" />
<polygon points="377.6,604.4 384.4,606.1 403.4,603.8 412.9,604.3 421.7,603.2 429.6,602.7 439.3,604.1 456.4,602.3 463.3,601.2 471.1,602.7 486.7,600.7 495.7,601.0 502.4,601.1 516.7,600.0 530.7,599.2 544.0,599.5 544.3,599.4 544.3,602.6 544.0,602.7 530.7,601.7 516.7,602.1 502.4,604.3 495.7,603.4 486.7,604.0 471.1,605.1 463.3,604.4 456.4,605.4 439.3,606.0 429.6,605.5 421.7,605.6 412.9,606.5 403.4,606.4 384.4,607.8 377.6,607.8" fill="rgb(0,0,8)" />
<polygon points="374.3,606.8 380.6,605.3 380.6,608.2" fill="rgb(0,0,8)" />
<polygon points="547.6,600.0 541.3,598.6 541.3,601.5" fill="rgb(0,0,8)" />
<polygon points="382.0,612.5 399.5,612.5 406.7,612.2 419.9,611.3 438.9,611.4 457.5,610.0 467.3,609.7 479.3,608.4 494.0,608.6 505.2,607.8 518.6,608.2 526.0,606.4 538.2,606.2 540.2,607.8 540.2,608.6 538.2,607.3 526.0,608.8 518.6,609.9 505.2,609.8 494.0,610.2 479.3,611.3 467.3,611.4 457.5,611.7 438.9,612.7 419.9,614.1 406.7,614.6 399.5,615.1 382.0,613.0" fill="rgb(0,0,14)" />
<polygon points="383.0,610.3 395.6,609.4 409.0,608.5 417.4,608.2 425.5,607.5 433.8,607.6 444.1,607.6 455.9,606.1 466.1,605.7 475.8,606.0 483.4,606.6 497.0,605.7 514.4,603.2 528.9,604.0 539.2,603.6 539.2,604.1 528.9,604.7 514.4,605.2 497.0,606.7 483.4,607.7 475.8,607.1 466.1,607.2 455.9,608.1 444.1,608.3 433.8,608.9 425.5,608.6 417.4,609.4 409.0,610.1 395.6,610.8 383.0,610.6" fill="rgb(0,0,36)" />
<polygon points="383.0,617.1 390.9,616.5 400.3,615.9 419.3,615.9 435.4,615.3 443.9,614.3 454.8,613.1 465.9,613.2 481.2,612.6 495.7,612.1 513.2,611.1 530.4,611.0 539.2,610.4 539.2,610.9 530.4,612.2 513.2,612.5 495.7,613.4 481.2,614.6 465.9,614.5 454.8,615.2 443.9,615.9 435.4,616.0 419.3,616.8 400.3,617.7 390.9,617.8 383.0,617.7" fill="rgb(0,0,36)" />
<polygon points="377.6,619.4 389.1,619.8 399.8,617.7 416.5,617.1 434.1,617.0 447.1,616.8 459.3,615.5 468.2,615.5 478.7,615.6 487.1,614.4 501.0,613.5 515.1,614.0 522.7,612.8 541.2,612.4 544.3,612.3 544.3,615.6 541.2,615.1 522.7,615.1 515.1,616.6 501.0,617.0 487.1,617.2 478.7,617.9 468.2,618.2 459.3,619.0 447.1,620.0 434.1,619.6 416.5,618.8 399.8,621.1 389.1,621.8 377.6,622.7" fill="rgb(0,0,8)" />
<polygon points="374.3,620.4 380.6,618.9 380.6,621.8" fill="rgb(0,0,8)" />
<polygon points="547.6,613.6 541.3,612.2 541.3,615.1" fill="rgb(0,0,8)" />
<polygon points="382.0,627.0 401.0,625.9 413.9,625.0 426.1,625.2 440.7,623.4 460.2,623.1 471.1,622.4 484.5,622.3 501.6,620.7 510.3,621.8 521.0,620.3 540.2,620.2 540.2,619.8 540.2,620.4 540.2,621.1 521.0,622.9 510.3,623.0 501.6,623.7 484.5,624.5 471.1,623.9 460.2,625.2 440.7,625.1 426.1,627.1 413.9,628.0 401.0,628.4 382.0,627.5" fill="rgb(0,0,14)" />
<polygon points="383.0,622.9 397.1,622.1 412.3,621.3 421.4,622.1 434.3,621.9 448.0,619.4 458.0,619.6 472.9,619.5 486.3,618.9 505.8,618.9 519.7,617.5 531.6,617.4 539.2,618.1 539.2,618.6 531.6,618.1 519.7,618.8 505.8,620.5 486.3,619.7 472.9,620.5 458.0,621.4 448.0,621.3 434.3,622.7 421.4,623.7 412.3,622.8 397.1,623.0 383.0,623.5" fill="rgb(0,0,36)" />
<polygon points="377.6,632.2 389.8,631.9 404.4,632.3 414.1,630.5 421.2,630.7 439.8,630.1 457.4,629.6 468.0,630.2 486.2,628.9 503.3,627.9 513.7,627.6 528.1,625.8 544.3,626.1 544.3,628.2 528.1,629.0 513.7,629.3 503.3,630.3 486.2,630.8 468.0,632.4 457.4,631.6 439.8,632.1 421.2,633.8 414.1,633.9 404.4,634.4 389.8,634.2 377.6,635.7" fill="rgb(0,0,8)" />
<polygon points="374.3,634.0 380.6,632.5 380.6,635.4" fill="rgb(0,0,8)" />
<polygon points="547.6,627.2 541.3,625.8 541.3,628.7" fill="rgb(0,0,8)" />
<polygon points="382.0,641.1 391.0,638.9 401.2,638.4 410.8,637.7 417.7,638.6 432.8,638.0 443.8,637.9 452.3,637.6 468.0,636.4 475.7,636.5 485.7,636.7 503.1,635.0 511.2,634.0 523.5,633.8 540.2,634.4 540.2,635.0 523.5,636.2 511.2,636.6 503.1,637.1 485.7,638.1 475.7,638.1 468.0,638.0 452.3,639.9 443.8,639.6 432.8,639.4 417.7,640.2 410.8,640.6 401.2,641.3 391.0,641.4 382.0,641.6" fill="rgb(0,0,14)" />
<polygon points="383.0,636.8 390.6,637.0 399.4,636.4 417.0,634.8 427.7,633.9 442.8,634.7 450.7,633.7 464.5,634.0 475.7,633.8 488.7,633.0 499.1,631.1 506.4,632.1 517.0,630.9 526.4,630.6 534.5,630.6 539.2,630.2 539.2,630.6 534.5,631.5 526.4,631.6 517.0,631.7 506.4,633.8 499.1,633.2 488.7,634.0 475.7,635.0 464.5,635.1 450.7,635.4 442.8,636.0 427.7,635.7 417.0,636.0 399.4,638.4 390.6,638.7 383.0,637.2" fill="rgb(0,0,36)" />
<polygon points="383.0,644.6 391.8,642.5 409.2,641.5 423.2,641.1 439.0,642.0 448.8,641.3 460.9,640.6 476.3,639.7 487.4,640.2 493.9,639.7 511.2,638.6 527.8,638.0 538.1,636.9 539.2,637.7 539.2,638.2 538.1,637.7 527.8,639.4 511.2,640.6 493.9,641.5 487.4,641.6 476.3,640.5 460.9,642.5 448.8,642.6 439.0,642.9 423.2,643.1 409.2,643.4 391.8,643.6 383.0,645.1" fill="rgb(0,0,36)" />
<polygon points="377.6,646.1 396.2,645.2 404.3,644.4 420.7,645.2 427.8,643.8 443.4,643.2 460.4,643.0 470.3,643.7 483.9,642.4 503.0,641.9 517.8,641.6 531.4,640.4 541.1,639.5 544.3,640.7 544.3,642.5 541.1,642.7 531.4,643.2 517.8,643.5 503.0,644.6 483.9,644.7 470.3,645.6 460.4,645.2 443.4,646.6 427.8,646.5 420.7,647.2 404.3,647.4 396.2,647.4 377.6,648.6" fill="rgb(0,0,8)" />
<polygon points="374.3,647.6 380.6,646.1 380.6,649.0" fill="rgb(0,0,8)" />
<polygon points="547.6,640.8 541.3,639.4 541.3,642.3" fill="rgb(0,0,8)" />
<polygon points="382.0,654.6 392.3,652.9 403.4,653.0 412.6,652.2 419.9,651.3 430.1,650.2 439.1,651.2 454.8,651.1 467.1,649.8 475.0,649.5 485.8,649.5 498.4,648.7 509.6,648.3 518.3,649.1 525.7,647.9 532.3,648.1 540.2,647.1 540.2,648.1 532.3,649.7 525.7,650.6 518.3,650.6 509.6,651.0 498.4,650.2 485.8,652.2 475.0,650.7 467.1,651.4 454.8,653.5 439.1,653.6 430.1,653.0 419.9,653.4 412.6,654.2 403.4,654.4 392.3,655.9 382.0,655.1" fill="rgb(0,0,14)" />
<polygon points="383.0,650.7 394.3,649.4 408.0,649.8 419.3,649.4 436.6,647.7 446.2,647.4 453.2,647.6 467.1,647.7 481.7,646.7 498.9,646.3 514.6,644.6 532.8,644.6 539.2,644.3 539.2,644.8 532.8,645.7 514.6,646.3 498.9,647.6 481.7,648.7 467.1,648.4 453.2,648.6 446.2,648.2 436.6,649.9 419.3,650.4 408.0,650.6 394.3,650.5 383.0,651.2" fill="rgb(0,0,36)" />
<polygon points="383.0,658.1 400.2,657.1 418.5,656.6 427.1,655.6 437.5,654.5 449.7,655.3 463.6,654.3 474.6,652.9 483.6,652.5 491.2,653.2 501.9,651.5 514.4,651.6 533.6,651.2 539.2,651.5 539.2,652.0 533.6,652.3 514.4,653.2 501.9,653.2 491.2,654.5 483.6,653.5 474.6,654.9 463.6,655.5 449.7,656.7 437.5,656.1 427.1,657.2 418.5,657.4 400.2,658.8 383.0,658.8" fill="rgb(0,0,36)" />
<polygon points="377.6,660.3 385.6,659.3 394.4,658.9 412.5,659.5 426.1,658.6 434.1,657.0 451.8,658.0 461.6,657.7 469.3,655.8 482.7,656.1 492.5,654.9 505.4,654.6 519.1,654.8 528.5,654.7 542.4,653.3 544.3,653.3 544.3,655.7 542.4,655.4 528.5,656.1 519.1,656.0 505.4,656.1 492.5,657.1 482.7,658.3 469.3,658.2 461.6,659.3 451.8,659.3 434.1,659.5 426.1,660.8 412.5,661.4 394.4,660.6 385.6,661.0 377.6,662.2" fill="rgb(0,0,8)" />
<polygon points="374.3,661.2 380.6,660.1 380.6,662.3" fill="rgb(0,0,8)" />
<polygon points="547.6,654.4 541.3,653.3 541.3,655.5" fill="rgb(0,0,8)" />
<polygon points="382.0,667.1 396.6,666.8 414.4,666.7 428.2,665.9 446.7,664.6 464.5,663.1 473.2,664.1 489.4,662.5 500.3,663.2 516.7,661.6 532.1,660.5 540.2,660.9 540.2,661.5 532.1,662.3 516.7,662.4 500.3,664.7 489.4,663.9 473.2,665.3 464.5,665.1 446.7,666.5 428.2,666.8 414.4,667.6 396.6,668.9 382.0,667.6" fill="rgb(0,0,14)" />
<polygon points="383.0,665.0 398.4,662.8 409.9,663.5 418.3,662.5 436.1,661.2 449.6,661.1 465.1,661.3 482.1,660.0 500.9,660.1 507.6,658.5 518.6,658.5 527.0,658.6 539.2,658.1 539.2,658.3 527.0,659.5 518.6,659.5 507.6,659.2 500.9,661.2 482.1,660.7 465.1,661.9 449.6,662.5 436.1,662.6 418.3,663.5 409.9,664.7 398.4,663.5 383.0,665.5" fill="rgb(0,0,36)" />
<polygon points="383.0,672.2 393.8,670.4 400.6,670.7 413.1,669.9 432.4,668.8 439.5,669.0 447.9,669.0 463.1,667.2 473.2,667.8 483.2,667.3 496.2,666.6 506.1,665.3 520.0,664.9 533.4,665.1 539.2,664.7 539.2,664.9 533.4,665.8 520.0,666.5 506.1,666.2 496.2,667.5 483.2,668.1 473.2,668.8 463.1,668.5 447.9,670.2 439.5,670.4 432.4,669.6 413.1,671.0 400.6,672.0 393.8,671.7 383.0,672.4" fill="rgb(0,0,36)" />
<polygon points="377.6,673.3 388.6,673.9 396.9,672.5 403.5,673.8 421.3,672.7 433.7,672.6 446.0,670.9 459.9,670.4 470.3,669.6 479.0,669.3 486.4,669.2 496.8,668.6 507.3,669.3 523.3,667.4 536.9,668.4 544.3,666.4 544.3,668.6 536.9,670.3 523.3,669.6 507.3,671.4 496.8,670.5 486.4,670.8 479.0,671.4 470.3,671.0 459.9,671.9 446.0,673.3 433.7,673.9 421.3,674.4 403.5,675.5 396.9,674.4 388.6,675.1 377.6,675.7" fill="rgb(0,0,8)" />
<polygon points="374.3,674.8 380.6,673.7 380.6,675.9" fill="rgb(0,0,8)" />
<polygon points="547.6,668.0 541.3,666.9 541.3,669.1" fill="rgb(0,0,8)" />
<polygon points="382.0,681.1 399.9,680.1 410.8,679.9 419.1,679.7 428.0,679.0 441.5,678.1 459.4,676.7 474.2,677.0 492.7,675.6 502.0,676.7 512.7,675.2 529.0,674.3 540.2,674.3 540.2,675.0 529.0,676.1 512.7,676.2 502.0,677.9 492.7,677.2 474.2,679.1 459.4,678.7 441.5,679.5 428.0,680.6 419.1,681.0 410.8,680.8 399.9,681.1 382.0,681.7" fill="rgb(0,0,14)" />
<polygon points="383.0,677.6 396.5,678.0 410.7,676.2 424.4,677.1 439.4,674.6 453.7,675.0 464.5,674.0 480.7,673.2 490.5,673.0 506.3,672.4 522.7,672.2 539.2,671.2 539.2,671.7 522.7,673.2 506.3,673.0 490.5,673.5 480.7,674.5 464.5,675.5 453.7,676.3 439.4,675.6 424.4,677.7 410.7,677.2 396.5,679.0 383.0,678.1" fill="rgb(0,0,36)" />
<polygon points="383.0,684.8 391.4,685.1 400.2,684.5 416.3,683.5 434.8,683.3 443.4,682.3 450.3,682.4 466.9,681.6 476.6,680.5 495.8,680.1 508.8,678.9 523.6,679.3 534.6,679.7 539.2,678.9 539.2,679.1 534.6,680.2 523.6,680.1 508.8,680.2 495.8,680.8 476.6,681.3 466.9,682.3 450.3,683.8 443.4,683.2 434.8,683.9 416.3,684.4 400.2,685.0 391.4,685.7 383.0,685.1" fill="rgb(0,0,36)" />
<polygon points="377.6,687.4 395.3,687.7 413.1,686.9 423.1,685.9 439.4,684.2 456.6,685.4 466.7,683.4 477.5,684.8 490.4,684.0 508.4,683.0 517.0,681.3 532.4,680.8 544.3,681.5 544.3,683.7 532.4,682.4 517.0,683.4 508.4,684.3 490.4,685.4 477.5,685.9 466.7,684.7 456.6,686.9 439.4,686.6 423.1,688.3 413.1,688.5 395.3,689.1 377.6,689.3" fill="rgb(0,0,8)" />
<polygon points="374.3,688.4 380.6,687.3 380.6,689.5" fill="rgb(0,0,8)" />
<polygon points="547.6,681.6 541.3,680.5 541.3,682.7" fill="rgb(0,0,8)" />
<polygon points="382.0,694.5 400.0,693.1 419.2,692.4 426.1,692.0 435.7,691.6 452.5,691.9 467.9,690.8 474.9,691.7 488.0,689.5 497.5,690.5 509.6,689.2 517.5,689.0 524.2,688.0 540.2,688.5 540.2,689.1 524.2,689.5 517.5,689.9 509.6,690.3 497.5,692.2 488.0,691.5 474.9,692.9 467.9,692.3 452.5,692.9 435.7,693.3 426.1,693.7 419.2,693.8 400.0,694.5 382.0,695.2" fill="rgb(0,0,14)" />
<polygon points="383.0,692.5 389.6,691.0 405.1,689.5 420.1,688.9 433.6,690.2 447.3,689.0 462.8,687.8 482.0,686.5 499.9,687.0 515.7,685.2 527.4,685.2 538.0,685.6 539.2,686.4 539.2,686.6 538.0,686.0 527.4,686.4 515.7,686.4 499.9,688.4 482.0,687.9 462.8,688.5 447.3,689.9 433.6,691.0 420.1,690.0 405.1,691.1 389.6,691.7 383.0,692.8" fill="rgb(0,0,36)" />
<polygon points="383.0,698.6 400.6,697.0 413.7,697.1 427.9,696.6 447.4,696.3 456.9,695.6 471.6,694.7 487.8,693.1 499.2,693.6 514.9,692.8 526.6,692.1 539.2,692.9 539.2,693.2 526.6,692.8 514.9,694.1 499.2,694.6 487.8,694.6 471.6,695.4 456.9,696.6 447.4,697.3 427.9,697.4 413.7,697.8 400.6,698.2 383.0,699.0" fill="rgb(0,0,36)" />
<polygon points="377.6,701.2 392.4,699.8 409.7,700.6 427.8,699.0 445.6,698.8 452.6,697.4 464.1,697.4 481.4,696.6 498.6,696.1 506.7,695.3 515.2,696.1 524.9,694.6 532.8,694.7 543.9,693.8 544.3,693.7 544.3,695.7 543.9,696.1 532.8,696.3 524.9,696.7 515.2,697.3 506.7,696.8 498.6,697.8 481.4,698.3 464.1,699.3 452.6,699.5 445.6,701.0 427.8,700.8 409.7,702.7 392.4,701.5 377.6,702.9" fill="rgb(0,0,8)" />
<polygon points="374.3,702.0 380.6,700.9 380.6,703.1" fill="rgb(0,0,8)" />
<polygon points="547.6,695.2 541.3,694.1 541.3,696.3" fill="rgb(0,0,8)" />
<polygon points="382.0,709.1 399.7,707.1 408.8,708.0 420.8,707.3 437.6,705.5 452.1,705.3 463.5,705.4 470.5,704.6 482.8,704.7 494.0,702.7 509.8,703.0 520.1,703.3 532.0,701.9 540.2,702.2 540.2,702.7 532.0,703.8 520.1,704.7 509.8,704.4 494.0,704.3 482.8,706.5 470.5,706.1 463.5,706.7 452.1,706.2 437.6,707.2 420.8,709.0 408.8,709.1 399.7,708.7 382.0,709.6" fill="rgb(0,0,14)" />
<polygon points="383.0,704.6 400.2,704.6 415.4,702.7 431.6,703.4 443.3,701.6 450.3,702.1 465.6,702.4 479.3,702.0 495.8,700.1 512.4,698.7 520.4,699.2 529.8,698.9 537.3,699.7 539.2,699.1 539.2,699.4 537.3,700.2 529.8,699.7 520.4,700.0 512.4,700.2 495.8,701.2 479.3,702.6 465.6,703.7 450.3,703.2 443.3,702.8 431.6,704.4 415.4,703.9 400.2,705.7 383.0,704.8" fill="rgb(0,0,36)" />
<polygon points="383.0,712.6 393.5,712.0 411.2,709.9 428.2,710.0 445.8,709.4 455.6,708.3 464.8,708.0 471.9,708.7 485.4,707.4 496.8,706.9 509.3,706.0 522.2,706.7 536.3,706.7 539.2,706.1 539.2,706.3 536.3,707.0 522.2,707.2 509.3,706.9 496.8,708.3 485.4,708.8 471.9,709.8 464.8,709.2 455.6,709.6 445.8,710.3 428.2,710.9 411.2,710.7 393.5,713.1 383.0,712.9" fill="rgb(0,0,36)" />
<polygon points="377.6,713.8 396.1,714.8 409.9,713.9 426.8,713.4 439.8,711.9 455.0,712.3 470.3,711.8 480.6,710.1 489.9,709.9 507.3,708.7 515.7,708.7 534.1,707.7 543.3,709.1 544.3,707.4 544.3,709.0 543.3,710.8 534.1,709.9 515.7,711.0 507.3,711.1 489.9,711.8 480.6,712.0 470.3,713.3 455.0,713.5 439.8,713.1 426.8,715.4 409.9,715.4 396.1,716.5 377.6,716.0" fill="rgb(0,0,8)" />
<polygon points="374.3,715.6 380.6,714.5 380.6,716.7" fill="rgb(0,0,8)" />
<polygon points="547.6,708.8 541.3,707.7 541.3,709.9" fill="rgb(0,0,8)" />
<polygon points="382.0,722.9 396.8,720.8 406.2,721.2 419.8,721.2 427.5,719.6 440.1,719.5 456.0,718.2 468.1,717.6 483.5,718.5 491.5,718.4 508.7,716.6 516.8,715.8 535.3,716.3 540.2,715.6 540.2,716.1 535.3,717.0 516.8,717.8 508.7,718.6 491.5,719.3 483.5,719.6 468.1,719.6 456.0,719.3 440.1,721.0 427.5,721.5 419.8,722.2 406.2,722.6 396.8,722.1 382.0,723.5" fill="rgb(0,0,14)" />
<polygon points="383.0,718.1 399.2,717.2 408.0,717.3 424.7,717.3 435.1,715.6 442.5,715.7 456.3,716.3 464.0,714.9 477.7,715.6 494.4,714.1 508.7,712.9 521.2,712.4 528.1,712.9 539.2,712.1 539.2,712.5 528.1,713.7 521.2,713.5 508.7,713.9 494.4,715.1 477.7,716.3 464.0,715.5 456.3,717.3 442.5,717.0 435.1,717.1 424.7,718.0 408.0,718.2 399.2,718.3 383.0,718.5" fill="rgb(0,0,36)" />
<polygon points="383.0,726.1 391.2,724.8 400.8,724.4 418.6,723.3 431.6,722.6 449.7,722.1 456.4,722.8 475.2,721.0 488.0,721.1 504.8,719.6 518.7,720.1 534.2,719.1 539.2,719.3 539.2,719.8 534.2,720.0 518.7,721.5 504.8,720.7 488.0,722.6 475.2,721.8 456.4,724.0 449.7,723.3 431.6,723.7 418.6,724.7 400.8,725.4 391.2,725.3 383.0,726.4" fill="rgb(0,0,36)" />
<polygon points="377.6,729.0 384.2,728.0 403.0,727.5 414.8,727.2 426.6,725.7 434.3,726.5 443.9,724.8 460.0,725.0 475.3,725.2 483.8,724.8 494.7,724.0 503.1,723.9 512.1,723.4 521.5,722.8 532.3,722.6 544.3,722.5 544.3,724.1 532.3,724.8 521.5,724.6 512.1,725.6 503.1,726.1 494.7,726.4 483.8,726.1 475.3,727.2 460.0,726.4 443.9,726.9 434.3,728.7 426.6,727.7 414.8,729.2 403.0,729.9 384.2,729.8 377.6,731.2" fill="rgb(0,0,8)" />
<polygon points="374.3,729.2 380.6,728.1 380.6,730.3" fill="rgb(0,0,8)" />
<polygon points="547.6,722.4 541.3,721.3 541.3,723.5" fill="rgb(0,0,8)" />
<polygon points="382.0,735.6 401.0,734.7 414.4,733.6 433.2,733.7 441.2,733.5 460.3,732.3 477.0,731.6 486.8,730.8 504.2,730.9 513.7,729.2 522.8,729.1 535.3,730.0 540.2,729.7 540.2,730.2 535.3,731.0 522.8,730.1 513.7,730.6 504.2,732.7 486.8,732.4 477.0,733.5 460.3,733.2 441.2,735.4 433.2,735.4 414.4,735.4 401.0,736.5 382.0,736.3" fill="rgb(0,0,14)" />
<polygon points="383.0,731.5 392.3,731.3 403.4,732.2 420.9,729.9 435.4,730.0 445.7,729.4 453.3,730.1 463.4,730.0 479.0,729.1 491.2,728.1 506.3,726.4 523.3,726.3 531.4,725.9 539.2,725.5 539.2,725.9 531.4,726.7 523.3,727.7 506.3,727.9 491.2,728.6 479.0,729.7 463.4,730.7 453.3,731.2 445.7,730.4 435.4,731.4 420.9,731.3 403.4,733.1 392.3,732.1 383.0,732.0" fill="rgb(0,0,36)" />
<polygon points="383.0,739.0 396.2,738.5 407.6,738.0 426.1,738.3 444.3,737.0 459.4,736.0 466.9,735.8 481.5,735.3 493.8,733.8 512.8,732.9 524.0,734.2 539.1,733.2 539.2,732.3 539.2,732.6 539.1,733.6 524.0,734.9 512.8,734.4 493.8,734.6 481.5,736.6 466.9,737.3 459.4,737.0 444.3,738.2 426.1,738.8 407.6,738.9 396.2,739.9 383.0,739.4" fill="rgb(0,0,36)" />
<polygon points="377.6,742.6 393.8,741.8 408.7,740.0 418.8,740.6 435.2,739.6 445.5,739.0 459.1,737.9 471.0,737.7 490.3,736.8 505.2,736.3 522.2,737.2 537.5,734.9 544.3,734.9 544.3,736.5 537.5,737.4 522.2,738.6 505.2,738.8 490.3,738.3 471.0,739.3 459.1,740.1 445.5,741.3 435.2,740.9 418.8,742.9 408.7,741.9 393.8,743.3 377.6,744.7" fill="rgb(0,0,8)" />
<polygon points="374.3,742.8 380.6,741.7 380.6,743.9" fill="rgb(0,0,8)" />
<polygon points="547.6,736.0 541.3,734.9 541.3,737.1" fill="rgb(0,0,8)" />
<polygon points="382.0,749.1 394.2,748.9 402.1,748.1 412.0,748.3 423.6,746.7 435.1,747.0 454.2,746.4 464.1,746.4 473.3,745.8 491.6,744.0 503.9,743.8 521.3,742.6 536.1,743.4 540.2,742.9 540.2,743.5 536.1,744.5 521.3,744.1 503.9,744.9 491.6,746.0 473.3,747.4 464.1,747.3 454.2,747.6 435.1,748.2 423.6,748.7 412.0,749.5 402.1,749.8 394.2,750.3 382.0,749.4" fill="rgb(0,0,14)" />
<polygon points="383.0,746.6 393.5,744.5 408.4,744.7 427.4,744.0 442.2,742.8 457.7,742.0 474.3,741.9 485.9,741.9 504.6,740.7 520.8,739.7 531.7,740.3 539.2,739.2 539.2,739.6 531.7,741.5 520.8,741.1 504.6,741.8 485.9,743.0 474.3,743.3 457.7,742.9 442.2,743.6 427.4,745.5 408.4,745.8 393.5,745.9 383.0,746.9" fill="rgb(0,0,36)" />
<polygon points="383.0,752.5 396.0,752.0 414.2,751.0 432.4,750.3 448.5,750.0 465.7,749.9 480.6,749.2 498.6,748.6 506.8,746.7 522.4,746.5 538.1,745.9 539.2,746.7 539.2,747.2 538.1,746.3 522.4,747.2 506.8,747.8 498.6,749.5 480.6,749.8 465.7,750.7 448.5,751.5 432.4,750.9 414.2,751.7 396.0,753.4 383.0,752.7" fill="rgb(0,0,36)" />
<polygon points="377.6,754.5 384.6,754.4 401.9,754.7 409.8,754.3 419.2,754.1 433.9,753.2 444.8,752.1 455.6,753.1 469.5,752.8 478.9,752.7 495.7,751.1 504.9,750.3 522.3,750.2 539.3,749.1 544.3,748.9 544.3,750.4 539.3,750.4 522.3,752.0 504.9,752.3 495.7,752.4 478.9,753.9 469.5,754.4 455.6,755.3 444.8,754.4 433.9,755.2 419.2,755.8 409.8,756.4 401.9,755.9 384.6,756.2 377.6,756.7" fill="rgb(0,0,8)" />
<polygon points="374.3,756.4 380.6,755.3 380.6,757.5" fill="rgb(0,0,8)" />
<polygon points="547.6,749.6 541.3,748.5 541.3,750.7" fill="rgb(0,0,8)" />
<polygon points="382.0,763.7 391.0,762.4 407.1,760.9 420.3,759.9 432.5,760.8 441.6,759.8 457.2,758.8 466.3,760.2 476.2,758.1 490.0,757.7 505.6,758.2 524.8,756.4 540.2,756.0 540.2,756.7 524.8,757.3 505.6,759.6 490.0,759.7 476.2,759.2 466.3,761.4 457.2,760.5 441.6,761.1 432.5,762.4 420.3,761.8 407.1,762.0 391.0,764.1 382.0,764.4" fill="rgb(0,0,14)" />
<polygon points="383.0,759.9 402.4,759.4 420.7,758.3 437.6,757.5 450.3,756.2 467.4,755.4 475.6,755.7 483.5,755.8 497.3,755.0 510.4,755.0 519.7,753.2 529.4,753.5 536.2,753.4 539.2,753.0 539.2,753.3 536.2,754.1 529.4,755.0 519.7,754.1 510.4,756.0 497.3,755.5 483.5,757.1 475.6,756.2 467.4,756.5 450.3,756.7 437.6,758.9 420.7,759.2 402.4,760.4 383.0,760.4" fill="rgb(0,0,36)" />
<polygon points="377.6,769.3 389.1,768.1 396.9,768.7 411.1,766.8 419.3,767.9 428.4,766.3 440.8,766.2 454.9,766.3 469.7,765.5 485.4,764.3 497.6,765.0 505.0,763.6 520.9,762.7 528.1,762.5 540.7,763.3 544.3,763.4 544.3,764.9 540.7,765.4 528.1,764.6 520.9,765.1 505.0,764.7 497.6,767.3 485.4,765.6 469.7,767.7 454.9,768.6 440.8,767.9 428.4,768.8 419.3,769.1 411.1,769.2 396.9,770.5 389.1,770.1 377.6,771.4" fill="rgb(0,0,8)" />
<polygon points="374.3,770.0 380.6,768.9 380.6,771.1" fill="rgb(0,0,8)" />
<polygon points="547.6,763.2 541.3,762.1 541.3,764.3" fill="rgb(0,0,8)" />
<polygon points="382.0,777.4 390.5,776.4 397.2,776.0 413.6,775.0 421.4,775.3 440.6,772.9 456.3,772.8 465.2,771.7 482.2,771.1 490.8,772.4 504.0,770.5 511.9,770.5 528.6,769.3 540.2,770.4 540.2,770.9 528.6,771.4 511.9,771.8 504.0,772.1 490.8,773.8 482.2,772.9 465.2,773.5 456.3,774.2 440.6,774.5 421.4,776.3 413.6,776.6 397.2,777.5 390.5,777.8 382.0,777.7" fill="rgb(0,0,14)" />
<polygon points="383.0,772.5 399.0,772.6 416.5,771.6 434.1,770.7 441.9,770.6 453.2,770.4 463.6,770.3 480.0,769.7 488.4,768.9 502.8,767.9 522.0,766.6 538.5,766.9 539.2,766.7 539.2,766.9 538.5,767.4 522.0,768.1 502.8,769.3 488.4,770.3 480.0,770.2 463.6,771.7 453.2,771.7 441.9,772.1 434.1,771.8 416.5,772.6 399.0,773.7 383.0,772.7" fill="rgb(0,0,36)" />
<polygon points="383.0,779.6 393.7,778.5 401.4,779.4 413.7,778.0 433.0,778.0 448.0,777.6 466.6,775.5 483.0,775.4 500.4,774.8 519.8,775.3 536.1,773.9 539.2,773.9 539.2,774.4 536.1,774.6 519.8,776.0 500.4,775.9 483.0,776.5 466.6,776.9 448.0,778.7 433.0,779.4 413.7,779.3 401.4,780.9 393.7,779.3 383.0,779.9" fill="rgb(0,0,36)" />
<polygon points="377.6,782.4 389.4,782.4 407.8,782.1 423.2,780.8 442.3,780.7 450.0,779.1 459.2,779.7 469.5,779.3 487.8,778.8 494.4,777.6 504.3,776.9 520.1,776.7 539.5,776.0 544.3,776.6 544.3,778.1 539.5,778.5 520.1,778.0 504.3,778.5 494.4,778.8 487.8,780.4 469.5,781.2 459.2,781.6 450.0,781.6 442.3,782.1 423.2,781.9 407.8,783.6 389.4,784.6 377.6,784.5" fill="rgb(0,0,8)" />
<polygon points="374.3,783.6 380.6,782.5 380.6,784.7" fill="rgb(0,0,8)" />
<polygon points="547.6,776.8 541.3,775.7 541.3,777.9" fill="rgb(0,0,8)" />
<polygon points="382.0,790.8 398.5,789.5 407.3,789.1 415.1,787.7 425.6,788.9 437.4,787.7 452.8,787.4 465.1,786.0 481.1,786.7 488.8,785.7 507.4,784.5 518.4,783.2 535.7,783.0 540.2,783.6 540.2,784.2 535.7,784.4 518.4,785.1 507.4,785.4 488.8,787.2 481.1,788.0 465.1,787.0 452.8,788.4 437.4,789.3 425.6,789.9 415.1,788.8 407.3,790.3 398.5,791.3 382.0,791.2" fill="rgb(0,0,14)" />
<polygon points="383.0,786.6 399.7,785.6 409.5,784.6 420.8,785.7 434.1,783.7 442.0,783.5 451.8,784.4 468.6,782.4 478.8,782.3 490.3,782.4 506.7,780.9 516.1,781.0 525.1,781.2 534.5,780.1 539.2,780.7 539.2,781.2 534.5,781.0 525.1,781.8 516.1,782.4 506.7,781.8 490.3,783.0 478.8,783.0 468.6,783.4 451.8,785.0 442.0,784.5 434.1,784.6 420.8,786.5 409.5,785.7 399.7,787.0 383.0,787.0" fill="rgb(0,0,36)" />
<polygon points="377.6,795.6 395.3,795.5 403.2,795.7 422.0,793.5 435.3,794.2 444.9,792.7 453.6,793.7 471.4,792.4 480.6,792.5 488.2,791.9 498.1,792.1 516.7,791.0 529.1,790.5 544.3,789.2 544.3,791.6 529.1,792.8 516.7,793.5 498.1,793.4 488.2,793.8 480.6,793.9 471.4,794.5 453.6,794.8 444.9,794.7 435.3,795.6 422.0,796.0 403.2,797.3 395.3,796.9 377.6,797.3" fill="rgb(0,0,8)" />
<polygon points="374.3,797.2 380.6,796.1 380.6,798.3" fill="rgb(0,0,8)" />
<polygon points="547.6,790.4 541.3,789.3 541.3,791.5" fill="rgb(0,0,8)" />
<polygon points="382.0,804.2 390.9,803.9 400.3,802.5 414.6,802.8 432.8,802.1 440.4,800.2 449.7,799.7 456.7,800.4 468.9,800.8 477.2,799.4 486.2,799.8 502.4,798.5 516.5,798.9 535.2,797.7 540.2,797.4 540.2,798.0 535.2,798.6 516.5,799.7 502.4,799.6 486.2,800.6 477.2,800.7 468.9,802.0 456.7,801.5 449.7,801.8 440.4,802.1 432.8,803.7 414.6,804.3 400.3,804.0 390.9,805.0 382.0,804.5" fill="rgb(0,0,14)" />
<polygon points="383.0,800.2 391.3,799.9 400.9,800.3 409.0,799.9 428.0,797.3 436.4,797.5 444.7,797.4 458.0,797.8 472.0,796.4 490.1,796.3 497.3,795.9 506.8,794.7 515.5,795.1 529.6,794.7 539.2,795.2 539.2,795.4 529.6,796.1 515.5,796.2 506.8,795.4 497.3,796.9 490.1,797.7 472.0,797.5 458.0,799.2 444.7,798.2 436.4,798.0 428.0,798.7 409.0,800.8 400.9,801.1 391.3,801.2 383.0,800.7" fill="rgb(0,0,36)" />
<polygon points="383.0,807.5 401.2,805.3 415.1,805.8 423.9,805.7 439.4,805.3 449.3,803.8 458.8,804.9 470.1,803.1 483.4,803.8 498.7,802.8 506.2,802.2 522.3,800.9 536.9,800.6 539.2,800.3 539.2,800.5 536.9,801.0 522.3,801.6 506.2,803.5 498.7,803.7 483.4,804.5 470.1,804.6 458.8,805.6 449.3,804.8 439.4,806.7 423.9,806.4 415.1,807.1 401.2,806.3 383.0,807.9" fill="rgb(0,0,36)" />
<polygon points="377.6,809.3 389.4,809.7 401.4,809.1 408.9,808.7 422.9,807.4 441.7,807.2 455.7,807.3 466.8,806.7 482.5,806.1 494.6,804.4 503.4,805.5 516.2,804.0 522.9,803.4 538.2,802.9 544.3,802.8 544.3,804.9 538.2,804.3 522.9,805.5 516.2,805.1 503.4,807.0 494.6,806.3 482.5,807.5 466.8,809.1 455.7,809.3 441.7,808.7 422.9,809.6 408.9,811.2 401.4,811.1 389.4,812.0 377.6,811.8" fill="rgb(0,0,8)" />
<polygon points="374.3,810.8 380.6,809.7 380.6,811.9" fill="rgb(0,0,8)" />
<polygon points="547.6,804.0 541.3,802.9 541.3,805.1" fill="rgb(0,0,8)" />
<polygon points="382.0,816.8 401.3,816.2 408.1,815.2 416.1,816.0 434.7,815.0 453.8,814.8 462.3,813.1 473.1,813.7 486.4,813.3 497.1,812.7 509.0,811.1 521.7,810.7 531.6,811.4 538.8,810.7 540.2,811.4 540.2,811.9 538.8,811.2 531.6,813.1 521.7,812.4 509.0,812.7 497.1,814.5 486.4,814.4 473.1,815.0 462.3,814.1 453.8,816.3 434.7,816.0 416.1,817.3 408.1,817.1 401.3,817.9 382.0,817.2" fill="rgb(0,0,14)" />
<polygon points="383.0,814.3 392.0,814.2 406.1,812.4 414.0,812.2 428.7,811.3 438.4,812.0 448.2,811.8 460.2,810.4 473.7,810.8 489.6,809.9 496.5,808.4 512.4,807.7 521.8,808.9 532.0,807.5 539.2,807.9 539.2,808.2 532.0,808.1 521.8,809.9 512.4,809.2 496.5,809.4 489.6,810.5 473.7,811.3 460.2,811.2 448.2,813.1 438.4,813.2 428.7,812.6 414.0,812.9 406.1,813.5 392.0,814.9 383.0,814.7" fill="rgb(0,0,36)" />
<polygon points="383.0,821.3 398.8,819.5 412.2,820.1 428.8,818.0 436.7,818.7 444.1,817.0 455.6,818.6 468.4,817.0 478.2,816.6 493.4,816.5 502.7,815.9 513.4,815.4 526.1,815.9 539.2,814.2 539.2,814.7 526.1,816.5 513.4,816.0 502.7,816.5 493.4,817.8 478.2,817.2 468.4,818.1 455.6,819.2 444.1,818.5 436.7,819.5 428.8,819.0 412.2,821.2 398.8,821.0 383.0,821.6" fill="rgb(0,0,36)" />
<polygon points="377.6,823.6 385.9,823.9 393.7,823.6 401.2,822.2 409.8,822.4 423.2,821.2 440.5,822.1 449.2,821.3 458.0,820.0 474.4,819.3 486.5,818.3 497.4,818.7 505.5,819.0 515.1,817.6 534.3,817.6 542.3,817.5 544.3,817.3 544.3,819.3 542.3,818.6 534.3,820.0 515.1,819.3 505.5,820.6 497.4,820.0 486.5,820.6 474.4,821.8 458.0,821.5 449.2,822.9 440.5,823.4 423.2,822.6 409.8,824.6 401.2,824.0 393.7,825.6 385.9,825.7 377.6,826.0" fill="rgb(0,0,8)" />
<polygon points="374.3,824.4 380.6,823.3 380.6,825.5" fill="rgb(0,0,8)" />
<polygon points="547.6,817.6 541.3,816.5 541.3,818.7" fill="rgb(0,0,8)" />
<polygon points="382.0,830.8 400.2,830.3 419.1,828.3 429.8,828.8 447.4,828.1 464.5,827.9 474.5,827.2 485.7,827.2 497.1,826.1 508.2,826.2 519.6,825.4 527.5,825.6 537.0,825.4 540.2,825.0 540.2,825.6 537.0,826.4 527.5,826.7 519.6,827.4 508.2,827.4 497.1,827.4 485.7,828.2 474.5,828.5 464.5,829.1 447.4,829.9 429.8,830.9 419.1,830.3 400.2,832.1 382.0,831.3" fill="rgb(0,0,14)" />
<polygon points="383.0,828.2 400.8,826.0 414.4,826.6 426.9,825.5 437.8,825.4 454.4,824.1 471.1,824.5 488.9,823.7 498.2,822.2 509.1,822.7 518.9,821.9 526.7,821.7 537.4,821.2 539.2,821.8 539.2,822.1 537.4,821.9 526.7,822.7 518.9,823.3 509.1,823.3 498.2,823.6 488.9,825.0 471.1,825.5 454.4,825.2 437.8,826.9 426.9,826.5 414.4,827.3 400.8,826.6 383.0,828.5" fill="rgb(0,0,36)" />
<polygon points="383.0,835.0 394.2,833.0 413.2,833.6 428.7,832.7 436.9,831.9 455.2,831.4 462.2,830.5 476.4,830.0 488.5,829.4 504.3,829.2 516.4,828.0 524.1,829.4 537.4,828.9 539.2,829.0 539.2,829.4 537.4,829.2 524.1,830.5 516.4,829.5 504.3,830.4 488.5,830.4 476.4,831.2 462.2,831.3 455.2,832.9 436.9,832.8 428.7,834.3 413.2,834.3 394.2,834.3 383.0,835.3" fill="rgb(0,0,36)" />
<polygon points="377.6,837.4 394.0,836.5 411.8,835.5 423.0,835.0 441.5,834.4 450.7,834.4 457.5,833.2 470.5,833.6 488.7,832.4 506.9,832.3 525.8,831.2 539.0,830.1 544.3,830.7 544.3,832.9 539.0,832.1 525.8,833.5 506.9,833.6 488.7,833.9 470.5,835.8 457.5,834.8 450.7,835.7 441.5,836.3 423.0,836.5 411.8,837.5 394.0,838.7 377.6,838.8" fill="rgb(0,0,8)" />
<polygon points="374.3,838.0 380.6,836.9 380.6,839.1" fill="rgb(0,0,8)" />
<polygon points="547.6,831.2 541.3,830.1 541.3,832.3" fill="rgb(0,0,8)" />
<polygon points="382.0,843.9 397.8,843.4 413.5,842.4 423.5,842.2 440.9,841.2 459.5,841.4 466.6,840.3 485.4,839.4 497.7,839.2 505.3,838.7 512.7,838.5 529.6,837.9 540.2,838.3 540.2,838.7 529.6,840.0 512.7,840.6 505.3,840.1 497.7,840.7 485.4,840.5 466.6,841.4 459.5,842.6 440.9,842.5 423.5,843.3 413.5,844.2 397.8,845.5 382.0,844.4" fill="rgb(0,0,14)" />
<polygon points="383.0,841.4 391.4,841.1 400.1,839.9 407.5,840.7 423.2,839.3 442.2,838.6 454.0,838.3 465.1,837.1 477.1,837.7 488.2,836.8 503.7,835.6 515.2,835.8 523.7,835.0 539.2,835.7 539.2,836.2 523.7,835.6 515.2,836.7 503.7,837.1 488.2,838.0 477.1,839.0 465.1,838.0 454.0,839.8 442.2,839.8 423.2,840.1 407.5,841.6 400.1,841.0 391.4,842.3 383.0,841.6" fill="rgb(0,0,36)" />
<polygon points="383.0,848.2 393.7,846.9 406.4,846.6 419.4,847.0 430.6,845.5 448.7,845.9 459.8,845.3 473.2,843.8 491.8,844.1 506.6,842.6 519.3,841.8 530.1,842.1 539.2,842.7 539.2,843.0 530.1,843.5 519.3,843.0 506.6,843.1 491.8,844.8 473.2,844.4 459.8,845.8 448.7,846.5 430.6,846.3 419.4,848.0 406.4,847.5 393.7,847.8 383.0,848.6" fill="rgb(0,0,36)" />
<polygon points="377.6,851.9 396.1,849.4 403.8,848.7 422.3,849.4 434.4,848.1 443.4,848.2 459.7,848.4 477.3,847.7 488.8,846.3 496.5,845.2 514.4,846.1 530.7,844.3 544.3,843.6 544.3,845.2 530.7,845.7 514.4,848.2 496.5,847.7 488.8,847.8 477.3,849.4 459.7,850.0 443.4,850.2 434.4,849.4 422.3,850.7 403.8,850.8 396.1,850.7 377.6,853.0" fill="rgb(0,0,8)" />
<polygon points="374.3,851.6 380.6,850.5 380.6,852.7" fill="rgb(0,0,8)" />
<polygon points="547.6,844.8 541.3,843.7 541.3,845.9" fill="rgb(0,0,8)" />
<polygon points="382.0,858.9 398.1,857.7 405.3,856.3 418.7,855.9 434.1,854.5 441.0,855.8 453.2,853.8 470.0,853.9 484.0,853.6 496.4,852.7 514.3,853.0 528.6,852.2 539.5,851.7 540.2,852.6 540.2,853.2 539.5,852.2 528.6,853.5 514.3,855.0 496.4,854.8 484.0,855.4 470.0,855.6 453.2,855.6 441.0,857.3 434.1,856.4 418.7,857.6 405.3,857.4 398.1,859.3 382.0,859.5" fill="rgb(0,0,14)" />
<polygon points="383.0,854.0 400.2,854.5 419.6,853.5 435.0,853.1 445.6,851.7 462.0,850.5 471.9,850.4 486.3,849.5 494.9,849.9 512.5,848.8 525.4,849.4 535.5,848.6 539.2,848.1 539.2,848.5 535.5,849.4 525.4,850.0 512.5,850.1 494.9,851.1 486.3,850.9 471.9,851.2 462.0,851.8 445.6,853.1 435.0,854.2 419.6,854.6 400.2,855.1 383.0,854.5" fill="rgb(0,0,36)" />
<polygon points="383.0,861.4 394.3,861.0 412.8,860.8 431.5,859.9 451.0,859.5 463.1,858.8 477.0,857.9 494.0,856.3 510.4,855.4 522.8,854.9 539.2,856.3 539.2,856.4 522.8,856.2 510.4,856.4 494.0,857.7 477.0,858.8 463.1,859.4 451.0,860.5 431.5,860.5 412.8,861.4 394.3,861.6 383.0,861.9" fill="rgb(0,0,36)" />
<polygon points="377.6,865.1 390.1,864.5 402.7,864.2 418.6,863.3 434.6,862.7 445.5,861.8 464.1,861.6 473.1,859.5 481.3,860.6 498.4,860.2 506.5,858.9 515.4,859.4 528.4,857.6 539.3,858.1 544.3,857.4 544.3,858.7 539.3,859.8 528.4,859.7 515.4,861.8 506.5,861.2 498.4,861.6 481.3,862.7 473.1,861.9 464.1,863.3 445.5,863.7 434.6,864.9 418.6,865.3 402.7,865.7 390.1,866.0 377.6,866.9" fill="rgb(0,0,8)" />
<polygon points="374.3,865.2 380.6,864.1 380.6,866.3" fill="rgb(0,0,8)" />
<polygon points="547.6,858.4 541.3,857.3 541.3,859.5" fill="rgb(0,0,8)" />
<polygon points="382.0,871.1 394.6,871.7 407.5,870.5 417.5,869.2 428.8,868.9 442.5,869.1 458.9,868.9 473.1,867.1 481.7,867.6 499.7,867.2 511.0,865.9 529.9,864.8 540.2,864.9 540.2,865.7 529.9,866.8 511.0,867.5 499.7,868.9 481.7,869.1 473.1,869.2 458.9,870.6 442.5,870.6 428.8,870.1 417.5,870.3 407.5,871.7 394.6,873.0 382.0,871.6" fill="rgb(0,0,14)" />
<polygon points="383.0,867.6 389.6,867.6 403.3,866.9 412.5,866.1 425.6,867.1 433.6,866.9 451.0,865.0 466.2,865.6 481.6,865.1 500.1,864.2 519.5,862.2 534.9,862.0 539.2,861.4 539.2,861.9 534.9,862.9 519.5,863.7 500.1,865.2 481.6,865.9 466.2,866.2 451.0,865.7 433.6,867.4 425.6,868.2 412.5,867.0 403.3,868.0 389.6,868.8 383.0,867.8" fill="rgb(0,0,36)" />
<polygon points="377.6,878.1 385.5,878.5 401.7,876.5 411.8,875.9 420.2,877.0 431.4,875.7 446.5,875.3 465.4,874.9 484.8,872.9 504.2,872.2 518.9,871.6 533.8,871.6 542.4,871.4 544.3,870.8 544.3,873.0 542.4,873.1 533.8,872.8 518.9,873.9 504.2,874.4 484.8,874.6 465.4,876.0 446.5,877.0 431.4,877.6 420.2,878.3 411.8,877.8 401.7,877.9 385.5,879.9 377.6,879.7" fill="rgb(0,0,8)" />
<polygon points="374.3,878.8 380.6,877.7 380.6,879.9" fill="rgb(0,0,8)" />
<polygon points="547.6,872.0 541.3,870.9 541.3,873.1" fill="rgb(0,0,8)" />
<polygon points="382.0,885.0 391.4,885.4 406.6,883.4 424.0,882.6 436.3,883.1 449.4,881.9 467.9,880.6 482.2,881.4 491.1,881.1 498.5,880.4 506.1,879.1 516.9,879.9 524.5,878.5 539.5,878.9 540.2,878.3 540.2,879.0 539.5,879.6 524.5,880.2 516.9,881.4 506.1,880.9 498.5,881.7 491.1,882.0 482.2,882.4 467.9,882.5 449.4,882.8 436.3,884.5 424.0,884.6 406.6,884.6 391.4,886.6 382.0,885.5" fill="rgb(0,0,14)" />
<polygon points="383.0,881.5 392.4,881.1 404.1,881.8 413.2,880.5 420.8,879.6 436.2,879.4 455.7,878.2 466.5,879.0 476.5,877.4 491.7,876.6 501.1,877.4 512.8,877.7 528.2,876.2 539.2,875.2 539.2,875.5 528.2,877.5 512.8,878.2 501.1,878.5 491.7,877.9 476.5,878.4 466.5,880.0 455.7,879.7 436.2,880.8 420.8,880.8 413.2,881.5 404.1,882.4 392.4,882.7 383.0,881.7" fill="rgb(0,0,36)" />
<polygon points="383.0,889.1 397.1,888.5 413.0,886.7 424.0,887.4 439.5,885.5 450.8,886.2 466.6,884.7 476.7,885.1 495.9,884.0 508.1,883.6 514.6,883.6 522.3,883.0 538.3,882.4 539.2,882.7 539.2,883.1 538.3,882.8 522.3,884.0 514.6,884.3 508.1,885.1 495.9,885.5 476.7,886.5 466.6,886.1 450.8,887.8 439.5,886.4 424.0,887.9 413.0,887.6 397.1,889.7 383.0,889.4" fill="rgb(0,0,36)" />
<polygon points="377.6,890.7 387.0,891.2 397.1,890.4 410.1,890.4 423.2,889.5 435.1,888.7 450.3,888.5 459.2,887.8 472.6,888.4 482.7,886.7 499.2,886.9 514.8,886.2 531.5,885.3 544.3,885.0 544.3,886.2 531.5,886.5 514.8,888.3 499.2,888.9 482.7,888.9 472.6,889.8 459.2,890.0 450.3,890.1 435.1,890.5 423.2,891.6 410.1,892.6 397.1,892.1 387.0,892.9 377.6,893.2" fill="rgb(0,0,8)" />
<polygon points="374.3,892.4 380.6,891.3 380.6,893.5" fill="rgb(0,0,8)" />
<polygon points="547.6,885.6 541.3,884.5 541.3,886.7" fill="rgb(0,0,8)" />
<polygon points="382.0,898.5 401.0,897.8 414.3,897.6 429.5,896.5 448.6,895.2 465.6,894.8 475.0,894.1 485.9,895.1 493.8,894.4 510.7,893.5 526.8,893.3 539.6,891.9 540.2,892.6 540.2,893.1 539.6,892.7 526.8,894.6 510.7,894.5 493.8,896.4 485.9,896.4 475.0,896.1 465.6,895.9 448.6,897.3 429.5,897.9 414.3,899.5 401.0,899.8 382.0,899.0" fill="rgb(0,0,14)" />
<polygon points="383.0,895.3 392.8,895.3 399.6,894.1 411.2,894.4 422.6,893.0 429.2,893.7 440.6,893.2 457.0,892.0 467.8,891.9 483.1,892.3 497.7,891.8 506.7,891.2 513.5,890.4 528.7,888.6 539.2,890.1 539.2,890.3 528.7,889.9 513.5,891.3 506.7,891.9 497.7,892.5 483.1,892.9 467.8,892.7 457.0,892.8 440.6,893.9 429.2,894.8 422.6,893.8 411.2,895.2 399.6,895.2 392.8,896.8 383.0,895.6" fill="rgb(0,0,36)" />
<polygon points="383.0,901.9 395.7,901.2 415.1,900.1 422.3,900.3 433.7,899.6 443.2,899.5 457.8,899.3 474.4,898.8 491.9,898.8 505.5,897.3 517.0,896.4 533.9,895.6 539.2,896.0 539.2,896.3 533.9,896.6 517.0,897.8 505.5,898.3 491.9,899.5 474.4,899.9 457.8,900.1 443.2,900.5 433.7,900.2 422.3,900.8 415.1,901.1 395.7,902.8 383.0,902.4" fill="rgb(0,0,36)" />
<polygon points="377.6,906.0 392.1,904.6 405.9,904.2 416.1,903.5 423.7,902.6 442.6,902.2 453.9,901.7 461.9,901.1 476.9,901.9 490.4,901.0 501.1,900.4 511.9,899.1 529.4,899.6 540.3,899.2 544.3,899.0 544.3,900.3 540.3,900.5 529.4,901.1 511.9,901.1 501.1,901.8 490.4,902.8 476.9,904.0 461.9,902.5 453.9,903.8 442.6,904.5 423.7,904.8 416.1,905.2 405.9,906.2 392.1,905.9 377.6,907.6" fill="rgb(0,0,8)" />
<polygon points="374.3,906.0 380.6,904.9 380.6,907.1" fill="rgb(0,0,8)" />
<polygon points="547.6,899.2 541.3,898.1 541.3,900.3" fill="rgb(0,0,8)" />
<polygon points="382.0,912.1 395.1,912.1 405.7,911.7 419.4,910.2 427.6,910.8 440.4,909.0 454.9,908.1 463.2,909.6 473.7,907.8 489.0,907.1 502.6,907.7 517.1,907.5 533.7,906.7 540.2,906.3 540.2,907.0 533.7,908.1 517.1,908.9 502.6,908.5 489.0,908.9 473.7,909.7 463.2,911.3 454.9,910.1 440.4,910.6 427.6,912.4 419.4,912.3 405.7,913.0 395.1,913.7 382.0,912.5" fill="rgb(0,0,14)" />
<polygon points="383.0,910.1 401.2,908.8 412.1,908.4 418.9,908.0 429.8,906.1 437.2,906.8 444.6,907.3 459.2,906.3 467.3,906.1 475.9,904.5 486.2,904.3 496.3,905.2 514.7,904.1 533.0,902.7 539.2,903.9 539.2,904.2 533.0,903.3 514.7,905.0 496.3,905.9 486.2,905.6 475.9,905.9 467.3,907.1 459.2,907.2 444.6,907.9 437.2,907.9 429.8,907.6 418.9,908.8 412.1,909.7 401.2,909.6 383.0,910.4" fill="rgb(0,0,36)" />
<polygon points="383.0,915.3 396.0,915.1 402.9,915.6 419.2,914.7 435.3,914.4 453.2,912.5 464.4,912.5 473.6,912.4 484.6,911.8 500.6,911.7 515.7,911.0 527.5,910.1 539.2,909.1 539.2,909.6 527.5,911.3 515.7,912.1 500.6,912.5 484.6,912.3 473.6,913.1 464.4,913.4 453.2,913.6 435.3,915.0 419.2,915.6 402.9,916.3 396.0,916.1 383.0,915.8" fill="rgb(0,0,36)" />
<polygon points="377.6,917.9 387.9,918.3 405.6,917.0 422.3,916.4 437.7,916.4 454.7,915.4 466.9,914.0 482.2,914.4 501.1,914.3 510.0,913.7 517.8,913.8 529.7,913.3 542.8,912.2 544.3,911.9 544.3,913.7 542.8,914.2 529.7,914.7 517.8,915.4 510.0,915.2 501.1,916.2 482.2,915.5 466.9,916.4 454.7,917.7 437.7,918.2 422.3,918.2 405.6,918.9 387.9,919.7 377.6,920.3" fill="rgb(0,0,8)" />
<polygon points="374.3,919.6 380.6,918.5 380.6,920.7" fill="rgb(0,0,8)" />
<polygon points="547.6,912.8 541.3,911.7 541.3,913.9" fill="rgb(0,0,8)" />
<polygon points="382.0,926.2 389.3,925.1 404.2,924.4 419.7,924.8 428.2,923.7 441.9,923.2 457.9,922.9 465.7,923.4 483.1,920.7 500.9,920.6 508.1,920.6 517.8,919.3 525.4,920.1 535.2,919.6 540.2,920.5 540.2,921.0 535.2,920.9 525.4,921.5 517.8,921.3 508.1,921.9 500.9,922.6 483.1,922.5 465.7,924.5 457.9,924.7 441.9,924.2 428.2,924.5 419.7,925.8 404.2,926.2 389.3,926.4 382.0,926.6" fill="rgb(0,0,14)" />
<polygon points="383.0,923.4 394.8,921.1 412.9,921.4 424.7,921.0 439.8,919.8 453.5,920.3 466.0,919.4 480.0,919.2 489.7,918.3 503.4,918.0 521.2,916.3 528.7,916.2 539.2,916.3 539.2,916.7 528.7,917.5 521.2,917.5 503.4,918.9 489.7,919.1 480.0,919.7 466.0,920.6 453.5,921.0 439.8,921.0 424.7,921.6 412.9,922.7 394.8,922.2 383.0,924.0" fill="rgb(0,0,36)" />
<polygon points="383.0,930.5 391.0,929.0 407.0,929.3 414.4,928.1 433.1,927.0 439.9,926.9 455.8,925.6 467.1,926.8 475.9,925.4 487.6,925.0 500.6,924.7 512.5,924.8 520.6,923.4 533.9,923.5 539.2,923.3 539.2,923.8 533.9,923.9 520.6,924.5 512.5,926.2 500.6,925.7 487.6,925.6 475.9,926.7 467.1,927.5 455.8,926.6 439.9,927.5 433.1,928.3 414.4,929.5 407.0,930.1 391.0,929.7 383.0,930.8" fill="rgb(0,0,36)" />
<polygon points="377.6,931.8 388.0,932.2 402.2,932.0 417.9,930.4 425.2,931.3 443.7,930.4 451.6,930.2 462.1,928.9 477.9,927.9 484.6,928.4 496.0,928.2 504.1,927.5 516.8,926.8 523.5,926.8 532.0,925.7 541.4,924.9 544.3,925.9 544.3,927.3 541.4,927.1 532.0,927.7 523.5,928.4 516.8,928.4 504.1,928.9 496.0,929.7 484.6,930.3 477.9,929.1 462.1,931.2 451.6,931.9 443.7,931.7 425.2,932.5 417.9,931.9 402.2,933.7 388.0,933.5 377.6,933.2" fill="rgb(0,0,8)" />
<polygon points="374.3,933.2 380.6,932.1 380.6,934.3" fill="rgb(0,0,8)" />
<polygon points="547.6,926.4 541.3,925.3 541.3,927.5" fill="rgb(0,0,8)" />
<polygon points="382.0,939.2 390.0,939.4 403.1,939.2 416.2,938.4 432.0,936.3 443.4,936.4 455.2,936.8 473.3,935.5 483.4,934.4 502.6,933.8 520.8,934.0 540.1,932.8 540.2,934.4 540.2,934.8 540.1,933.1 520.8,935.7 502.6,935.3 483.4,936.1 473.3,937.2 455.2,937.9 443.4,937.6 432.0,938.2 416.2,940.0 403.1,940.9 390.0,940.4 382.0,939.9" fill="rgb(0,0,14)" />
<polygon points="383.0,937.3 394.4,936.4 409.9,935.4 426.0,935.0 441.0,934.6 452.7,933.9 466.6,932.5 479.8,932.6 488.8,932.5 507.6,930.8 526.7,930.7 539.2,930.1 539.2,930.3 526.7,931.4 507.6,931.4 488.8,933.7 479.8,934.0 466.6,933.4 452.7,934.9 441.0,935.4 426.0,936.4 409.9,936.6 394.4,937.1 383.0,937.7" fill="rgb(0,0,36)" />
<polygon points="383.0,943.1 398.8,943.2 408.2,941.7 425.8,940.4 436.5,940.9 454.1,939.7 464.5,940.6 474.5,940.0 486.1,938.0 492.8,937.6 504.9,938.5 516.4,937.6 523.0,936.7 539.2,936.7 539.2,937.0 523.0,937.8 516.4,938.9 504.9,939.8 492.8,938.8 486.1,939.4 474.5,941.4 464.5,941.5 454.1,940.5 436.5,941.9 425.8,941.6 408.2,942.2 398.8,944.0 383.0,943.3" fill="rgb(0,0,36)" />
<path d="M379,436.2 Q463,445 546,436.6" fill="none" stroke="#00000c" stroke-width="1.1"/>
<path d="M380,440.6 Q463,449.5 542,441.4" fill="none" stroke="#000018" stroke-width="1"/>
<path d="M376,444.6 Q463,452 541,446" fill="none" stroke="#000010" stroke-width="1.6"/>
</g>
<polygon points="163.0,246.5 262.5,246.5 271.5,249.8 657.0,254.0 651.0,264.0 648.0,276.0 613.0,330.0 597.0,356.0 597.0,430.0 547.0,429.0 377.0,428.0 330.0,427.5 163.0,427.5" fill="rgb(2,2,172)" />
<polygon points="657.0,254.0 651.0,264.0 696.0,264.0 761.0,258.0 803.0,251.0 949.0,251.5 949.0,431.0 597.0,430.5 597.0,356.0 613.0,330.0 648.0,276.0" fill="rgb(2,2,162)" />
<polygon points="651.0,264.0 696.0,264.0 761.0,258.0 803.0,251.0 949.0,251.5 949.0,275.0 648.0,276.0" fill="rgb(2,2,166)" />
<polygon points="271.5,249.5 352.0,191.0 446.0,169.0 559.0,187.5 657.0,254.0 640.0,262.0 300.0,262.0" fill="rgb(2,2,172)" />
<polygon points="330.0,356.0 597.0,356.0 597.0,430.0 547.0,429.0 377.0,428.0 330.0,427.5" fill="rgb(3,3,168)" />
<defs><linearGradient id="gW" x1="330" y1="0" x2="376" y2="0" gradientUnits="userSpaceOnUse"><stop offset="0" stop-color="rgb(4,4,118)"/><stop offset="1" stop-color="rgb(5,5,158)"/></linearGradient></defs>
<polygon points="330.0,358.0 330.0,427.5 376.0,428.0" fill="url(#gW)" />
<polygon points="597.0,357.0 597.0,430.0 560.0,429.5" fill="rgb(4,4,150)" opacity="0.6"/>
<path d="M377,428 L547,428 Q462,440 377,428 Z" fill="rgb(6,6,166)"/>
<defs><linearGradient id="gWr" x1="553" y1="0" x2="600" y2="0" gradientUnits="userSpaceOnUse"><stop offset="0" stop-color="rgb(6,40,176)"/><stop offset="1" stop-color="rgb(4,84,176)"/></linearGradient></defs>
<polygon points="551.0,429.0 597.0,430.0 597.0,434.2 575.0,436.5 553.0,440.0" fill="url(#gWr)" />
<path d="M272,252.5 L657,254" fill="none" stroke="#05052a" stroke-width="1.1"/>
<path d="M263,247.5 L272,250.5 Q300,257 340,267 Q470,300 652,264" fill="none" stroke="#05052a" stroke-width="1.1"/>
<path d="M657,254 L651,264 L648,276 L613,330 L597,356" fill="none" stroke="#05052a" stroke-width="1.1"/>
<path d="M646.5,275.8 L760,272.5" fill="none" stroke="#02021e" stroke-width="1"/>
<path d="M651,263.5 L696,263.8" fill="none" stroke="#02021e" stroke-width="1" opacity="0.7"/>
<path d="M345,355.2 L470,355.4 L597,356.6" fill="none" stroke="#05052a" stroke-width="1.1"/>
<path d="M597.5,356 L597.5,434" fill="none" stroke="#05052a" stroke-width="1.1"/>
<path d="M330.5,356 L330.5,427" stroke="#030360" stroke-width="1" fill="none"/>
<path d="M162.7,370 L162.7,433" stroke="#030340" stroke-width="1" fill="none"/>
<path d="M163.0,384.3 C171.3,385.2 197.8,386.4 213.0,390.0 C228.2,393.6 239.8,399.4 254.0,405.7 C268.2,412.0 284.6,419.2 298.0,427.6 C311.4,436.0 323.6,446.2 334.6,455.8 C345.6,465.4 357.0,478.0 364.0,485.0 C371.0,492.0 374.5,495.7 376.6,497.8" fill="none" stroke="#02021e" stroke-width="1"/>
<path d="M252.6,443.8 C257.8,445.1 273.1,448.1 284.0,451.5 C294.9,454.9 307.3,459.1 317.8,464.0 C328.3,468.9 337.2,475.4 347.0,481.0 C356.8,486.6 371.7,495.0 376.6,497.8" fill="none" stroke="#02021e" stroke-width="1"/>
<path d="M330,427.5 L378.5,435.8" fill="none" stroke="#02021e" stroke-width="1"/>
<path d="M547.0,441.0 C551.7,440.2 566.7,437.7 575.0,436.5 C583.3,435.3 586.2,433.8 597.0,434.0 C607.8,434.2 622.8,437.4 640.0,438.0 C657.2,438.6 683.3,437.9 700.0,437.5 C716.7,437.1 725.5,436.6 740.0,435.6 C754.5,434.6 779.2,432.3 787.0,431.6" fill="none" stroke="#02021e" stroke-width="1"/>
<path d="M712.5,500.7 C717.1,496.1 732.1,480.9 740.0,473.0 C747.9,465.1 752.2,459.8 760.0,453.0 C767.8,446.2 774.0,438.2 787.0,432.0 C800.0,425.8 821.5,422.0 838.0,416.0 C854.5,410.0 872.3,400.3 886.0,396.0 C899.7,391.7 909.5,391.3 920.0,390.0 C930.5,388.7 944.2,388.3 949.0,388.0" fill="none" stroke="#02021e" stroke-width="1"/>
<path d="M712.5,500.7 C717.1,497.8 731.8,488.6 740.0,483.0 C748.2,477.4 753.8,471.8 761.6,467.0 C769.4,462.2 778.8,456.8 787.0,454.0 C795.2,451.2 803.8,451.2 811.0,450.5 C818.2,449.8 823.8,449.8 830.0,449.5 C836.2,449.2 845.0,449.1 848.0,449.0" fill="none" stroke="#02021e" stroke-width="1"/>
<path d="M949,330 L946,334" fill="none" stroke="#02021e" stroke-width="1"/>
<path d="M375,428.4 Q461,440.2 547,428.4" fill="none" stroke="rgb(246,132,56)" stroke-width="1.6"/>
<path d="M504,507.5 L510.5,507.5 M507.2,504 L507.2,511" stroke="rgb(244,172,48)" stroke-width="1.2" fill="none"/>
<defs><linearGradient id="lg" x1="0" y1="0" x2="0" y2="1">
<stop offset="0" stop-color="#ff0000"/>
<stop offset="0.03" stop-color="#ff1800"/>
<stop offset="0.125" stop-color="#ff8000"/>
<stop offset="0.25" stop-color="#ffff00"/>
<stop offset="0.375" stop-color="#80ff00"/>
<stop offset="0.5" stop-color="#00ff00"/>
<stop offset="0.625" stop-color="#00ff80"/>
<stop offset="0.75" stop-color="#00ffff"/>
<stop offset="0.875" stop-color="#0080ff"/>
<stop offset="0.97" stop-color="#0010ff"/>
<stop offset="1" stop-color="#0000ff"/>
</linearGradient></defs>
<rect x="762" y="214" width="24.5" height="298.6" fill="url(#lg)"/>
<rect x="762" y="213" width="27" height="1" fill="#281010"/>
<rect x="762" y="512.5" width="27" height="1" fill="#101040"/>
<text x="798.4" y="212.8" font-size="11" fill="#0c0c14" textLength="48.8" lengthAdjust="spacingAndGlyphs">1.520e-02</text>
<rect x="786.3" y="243.0" width="2.7" height="1" fill="#181820"/>
<text x="798.4" y="242.8" font-size="11" fill="#0c0c14" textLength="48.8" lengthAdjust="spacingAndGlyphs">1.368e-02</text>
<rect x="786.3" y="273.0" width="2.7" height="1" fill="#181820"/>
<text x="798.4" y="272.8" font-size="11" fill="#0c0c14" textLength="48.8" lengthAdjust="spacingAndGlyphs">1.216e-02</text>
<rect x="786.3" y="302.9" width="2.7" height="1" fill="#181820"/>
<text x="798.4" y="302.7" font-size="11" fill="#0c0c14" textLength="48.8" lengthAdjust="spacingAndGlyphs">1.064e-02</text>
<rect x="786.3" y="332.9" width="2.7" height="1" fill="#181820"/>
<text x="798.4" y="332.7" font-size="11" fill="#0c0c14" textLength="48.8" lengthAdjust="spacingAndGlyphs">9.120e-03</text>
<rect x="786.3" y="362.9" width="2.7" height="1" fill="#181820"/>
<text x="798.4" y="362.7" font-size="11" fill="#0c0c14" textLength="48.8" lengthAdjust="spacingAndGlyphs">7.600e-03</text>
<rect x="786.3" y="392.9" width="2.7" height="1" fill="#181820"/>
<text x="798.4" y="392.7" font-size="11" fill="#0c0c14" textLength="48.8" lengthAdjust="spacingAndGlyphs">6.080e-03</text>
<rect x="786.3" y="422.9" width="2.7" height="1" fill="#181820"/>
<text x="798.4" y="422.7" font-size="11" fill="#0c0c14" textLength="48.8" lengthAdjust="spacingAndGlyphs">4.560e-03</text>
<rect x="786.3" y="452.8" width="2.7" height="1" fill="#181820"/>
<text x="798.4" y="452.6" font-size="11" fill="#0c0c14" textLength="48.8" lengthAdjust="spacingAndGlyphs">3.040e-03</text>
<rect x="786.3" y="482.8" width="2.7" height="1" fill="#181820"/>
<text x="798.4" y="482.6" font-size="11" fill="#0c0c14" textLength="48.8" lengthAdjust="spacingAndGlyphs">1.520e-03</text>
<text x="798.4" y="512.6" font-size="11" fill="#0c0c14" textLength="48.8" lengthAdjust="spacingAndGlyphs">2.570e-13</text>
<text x="762.4" y="182.8" font-size="10.6" fill="#0c0c14" textLength="32.8" lengthAdjust="spacingAndGlyphs">ESTRN</text>
<text x="20.5" y="24.6" font-size="12" fill="#0a0a0a" textLength="274" lengthAdjust="spacingAndGlyphs">Model name: Screw2-plate-bone Assembly (for sim)</text>
<text x="20.5" y="39.6" font-size="12" fill="#0a0a0a" textLength="260" lengthAdjust="spacingAndGlyphs">Study name: 500N Tensile Test (sliding)(-Default-)</text>
<text x="20.5" y="54.6" font-size="12" fill="#0a0a0a" textLength="152" lengthAdjust="spacingAndGlyphs">Plot type: Static strain Strain1</text>
<text x="20.5" y="69.6" font-size="12" fill="#0a0a0a" textLength="106.5" lengthAdjust="spacingAndGlyphs">Deformation scale: 1</text>
<text x="42.6" y="831.3" font-size="8" fill="#40dc98">Y</text>
<rect x="42.6" y="845" width="4.7" height="16.5" fill="#86fc9c"/>
<rect x="43.6" y="845" width="1.6" height="16.5" fill="#d8ffe0"/>
<polygon points="44.9,837.4 49.2,846.2 40.8,846.2" fill="#28c848"/>
<rect x="42.6" y="861" width="4.7" height="6.2" fill="#1c9c30"/>
<rect x="47.3" y="865.2" width="20" height="3" fill="#0a0ac4"/>
<polygon points="74,866.7 66,863.3 66,870.1" fill="#0a0ac8"/>
<text x="79" y="869.5" font-size="8" fill="#0c28c8">Z</text>
<text x="16.5" y="919.5" font-size="11.5" font-weight="bold" fill="#0a1458">*Left</text>
<text x="65" y="903.5" font-size="14" font-weight="bold" fill="rgb(152,168,194)" textLength="472" lengthAdjust="spacingAndGlyphs">SOLIDWORKS Educational Product. For Instructional Use Only.</text>
<rect x="0" y="0" width="358" height="2" fill="#d0d0d0"/>
<rect x="108" y="0" width="74" height="2" fill="#fbfbfb"/>
<rect x="0" y="2" width="358" height="1" fill="#7c7c7c"/>
<rect x="107.5" y="0" width="1" height="2" fill="#8a8a8a"/><rect x="181.5" y="0" width="1" height="2" fill="#8a8a8a"/><rect x="237.5" y="0" width="1" height="2" fill="#8a8a8a"/><rect x="357.5" y="0" width="1" height="3" fill="#8a8a8a"/>
<g fill="none" stroke="#8c9098" stroke-width="1"><path d="M821.5,0 V2.5 H832.5 V0"/><path d="M847.5,0 V2.5 H858.5 V0"/><path d="M898.5,0 V2.5 H907.5 V0"/><path d="M927,0 L929,2 M936,0 L934,2"/></g>
<rect x="873" y="0" width="11" height="2.6" fill="#8a8c92"/>
<rect x="0" y="3" width="3" height="922" fill="#f9f9f9"/>
<rect x="3" y="3" width="1" height="424" fill="#6e6e6e"/>
<rect x="3" y="427" width="0.6" height="498" fill="#f4f4f8"/>
<rect x="949" y="3" width="2" height="922" fill="#d8dde6"/>
<rect x="0" y="372" width="2" height="2" fill="#6080b0"/><rect x="0" y="392" width="2" height="3" fill="#303030"/><rect x="0" y="418" width="2" height="3" fill="#303030"/>
<rect x="3" y="434" width="9" height="37" fill="#f4f4f6"/>
<circle cx="7" cy="452" r="2.6" fill="#c4c4c4" stroke="#8c8c8c" stroke-width="0.8"/>
<rect x="0" y="925" width="951" height="15" fill="#f0f0f0"/>
<rect x="0" y="924.6" width="951" height="1" fill="#c0c8cc"/>
<rect x="28" y="925.5" width="131" height="14.5" fill="#d9d9d9" stroke="#8e8e8e" stroke-width="1"/>
<rect x="159.5" y="925" width="183" height="15" fill="#ffffff"/>
<rect x="343" y="926.5" width="605.5" height="15" fill="#f8f8f8" stroke="#a0a0a0" stroke-width="1"/>
<text x="0" y="937" font-size="12" fill="#111">dy 1</text>
<text x="57" y="937" font-size="12" fill="#111" textLength="90" lengthAdjust="spacingAndGlyphs">500N Tensile Test</text>
<text x="182" y="937" font-size="12" font-weight="bold" fill="#000" textLength="146" lengthAdjust="spacingAndGlyphs">500N Tensile Test (sliding)</text>
<g transform="translate(37,928)" stroke="#202020" stroke-width="1.1" fill="none"><path d="M0.5,0 L3,3 L0.5,6 M3.5,2 L6,5 L3.5,8 M8,1 L8,8 M5.5,6 L8,9 L10.5,6"/></g>
<g transform="translate(168,928)" stroke="#202020" stroke-width="1.1" fill="none"><path d="M0.5,0 L3,3 L0.5,6 M3.5,2 L6,5 L3.5,8 M8,1 L8,8 M5.5,6 L8,9 L10.5,6"/></g>
<defs>
<linearGradient id="gBlue" x1="0" y1="0" x2="1" y2="1"><stop offset="0" stop-color="#cfe6f4"/><stop offset="1" stop-color="#5f9cc4"/></linearGradient>
<linearGradient id="gGray" x1="0" y1="0" x2="1" y2="1"><stop offset="0" stop-color="#f4f4f4"/><stop offset="1" stop-color="#9a9a9a"/></linearGradient>
<radialGradient id="gLens" cx="0.4" cy="0.35" r="0.7"><stop offset="0" stop-color="#ffffff"/><stop offset="1" stop-color="#d4dde6"/></radialGradient>
<radialGradient id="gOrb" cx="0.45" cy="0.4" r="0.65"><stop offset="0" stop-color="#3f86ac"/><stop offset="1" stop-color="#123e5e"/></radialGradient>
<linearGradient id="gBlue2" x1="0" y1="0" x2="1" y2="1"><stop offset="0" stop-color="#9cc8e4"/><stop offset="1" stop-color="#4684b0"/></linearGradient>
</defs>
<g><path d="M308.5,19 L303,25" stroke="#62a0c4" stroke-width="3.8" stroke-linecap="round"/><circle cx="312.6" cy="14.8" r="6" fill="url(#gLens)" stroke="#8c9096" stroke-width="1.4"/><path d="M312.6,10.6 l-1.6,1.8 h3.2 z M312.6,19 l-1.6,-1.8 h3.2 z M308.4,14.8 l1.8,-1.6 v3.2 z M316.8,14.8 l-1.8,-1.6 v3.2 z" fill="#555"/></g>
<g><path d="M333.5,20 L328,26" stroke="#62a0c4" stroke-width="3.8" stroke-linecap="round"/><circle cx="337.6" cy="15.8" r="6" fill="url(#gLens)" stroke="#8c9096" stroke-width="1.4"/><rect x="332.5" y="9.5" width="12.5" height="12" fill="none" stroke="#555" stroke-width="1" stroke-dasharray="2.5,1.5"/></g>
<g><path d="M354.5,17.8 L366.0,10 L370.0,14 L360.9,24 Z" fill="url(#gGray)" stroke="#707478" stroke-width="0.9" stroke-linejoin="round"/><path d="M363.0,12 L367.0,16.5" stroke="#8a8e92" stroke-width="0.8"/><ellipse cx="357.5" cy="21" rx="4.4" ry="3" transform="rotate(-45 357.5 21)" fill="#f4f4f4" stroke="#707478" stroke-width="0.9"/><ellipse cx="357.5" cy="21" rx="2.4" ry="1.5" transform="rotate(-45 357.5 21)" fill="#c4c8cc"/></g>
<path d="M362.5,21.6 l4.2,-3.4 v2.1 h4.6 v2.6 h-4.6 v2.1 z" fill="#3f7fb0"/>
<g><path d="M379.5,14 Q388,7 397,14 V24 Q392,26 388,26 Q384,26 379.5,24 Z" fill="#5a8fb4" stroke="#3c6c90" stroke-width="0.9"/><path d="M384.5,14.5 Q388,12 391.5,14.5 V25.5 H384.5 Z" fill="#e4e8ec" stroke="#8c9aa6" stroke-width="0.6"/><path d="M380.5,18 l3.5,-3.5 M380.5,21.5 l3.5,-3.5 M380.5,25 l3.5,-3.5 M392,18 l4.5,-3.5 M392,21.5 l4.5,-3.5 M392,25 l4.5,-3.5" stroke="#cfe2f0" stroke-width="0.9"/></g>
<g><path d="M404.5,18.3 L416.0,10.5 L420.0,14.5 L410.9,24.5 Z" fill="url(#gGray)" stroke="#707478" stroke-width="0.9" stroke-linejoin="round"/><path d="M413.0,12.5 L417.0,17.0" stroke="#8a8e92" stroke-width="0.8"/><ellipse cx="407.5" cy="21.5" rx="4.4" ry="3" transform="rotate(-45 407.5 21.5)" fill="#f4f4f4" stroke="#707478" stroke-width="0.9"/><ellipse cx="407.5" cy="21.5" rx="2.4" ry="1.5" transform="rotate(-45 407.5 21.5)" fill="#c4c8cc"/></g>
<path d="M408.5,9 l6.5,-1.2 l-3,4.2 l4.2,0 l-8.6,5.4 l2.6,-4.2 l-4.2,0 z" fill="#f0a818" stroke="#c88408" stroke-width="0.4"/>
<text x="412.5" y="27.2" font-size="13.5" font-family="Liberation Serif, serif" fill="#4a7ea8" font-weight="bold">A</text>
<g stroke="#4c6c84" stroke-width="0.9"><path d="M431.5,13 L436,9 L449,9 L449,23 L444.5,27.5 L431.5,27.5 Z" fill="#f2f6fa"/><rect x="431.5" y="13" width="13" height="14.5" fill="url(#gBlue)"/><path d="M444.5,13 L449,9 M440,9 V13 M449,17 H444.5" fill="none"/></g>
<polygon points="456,17.0 462,17.0 459,20.5" fill="#8c8c8c"/>
<g stroke="#4c6c84" stroke-width="0.9" stroke-linejoin="round"><path d="M472.5,11.5 L481,8.5 L489,11 V22.5 L481,25.5 L472.5,22.5 Z" fill="#e4eef6"/><path d="M472.5,11.5 L480.5,13.5 V25.5 L472.5,22.5 Z" fill="url(#gBlue2)"/><path d="M480.5,13.5 L489,11 V22.5 L480.5,25.5 Z" fill="#f4f4f2"/></g>
<polygon points="496.5,16.5 502.5,16.5 499.5,20" fill="#8c8c8c"/>
<g><path d="M511,18 Q520,9.5 529.5,18 Q520,25.5 511,18 Z" fill="#e0e0e0" stroke="#7c7c7c" stroke-width="1.1"/><circle cx="520" cy="17.3" r="3.6" fill="#6c6c6c"/><path d="M520,10 V26" stroke="#6c6c6c" stroke-width="1"/></g>
<polygon points="536.5,16.5 542.5,16.5 539.5,20" fill="#8c8c8c"/>
<defs><radialGradient id="gGloss" cx="0.36" cy="0.3" r="0.75"><stop offset="0" stop-color="#ffffff" stop-opacity="0.6"/><stop offset="0.45" stop-color="#ffffff" stop-opacity="0.08"/><stop offset="1" stop-color="#000020" stop-opacity="0.25"/></radialGradient></defs>
<g><clipPath id="oc558"><circle cx="558.6" cy="15.6" r="7.7"/></clipPath><g clip-path="url(#oc558)"><rect x="550.9" y="7.8999999999999995" width="9.239999999999963" height="9.394000000000002" fill="#4c8ad8"/><rect x="560.14" y="7.8999999999999995" width="6.160000000000082" height="9.394000000000002" fill="#dc4450"/><rect x="550.9" y="17.294" width="9.239999999999963" height="6.006" fill="#44a848"/><rect x="560.14" y="17.294" width="6.160000000000082" height="6.006" fill="#ecc050"/><circle cx="558.6" cy="15.6" r="7.7" fill="url(#gGloss)"/></g><circle cx="558.6" cy="15.6" r="7.7" fill="none" stroke="#586878" stroke-opacity="0.45" stroke-width="0.7"/></g>
<path d="M557.6,27.2 L559.6,22.3 L566.6,15.2 L569.6,18.2 L562.4,25.4 Z" fill="#f0d070" stroke="#4a3a28" stroke-width="0.8" stroke-linejoin="round"/><path d="M564.8,17 L567.8,20 L569.6,18.2 L566.6,15.2 Z" fill="#a87870" stroke="#4a3a28" stroke-width="0.6"/><path d="M557.6,27.2 L559.2,23.4 L561.4,25.6 Z" fill="#2c2c2c"/>
<rect x="576.2" y="16.6" width="18.6" height="11.2" fill="#484848"/><path d="M577.4,18.6 h2.4 v1.6 h-2.4 z M591.4,18.6 h2.4 v1.6 h-2.4 z M577.4,21.8 h2 v1.4 h-2 z M592,21.8 h2 v1.4 h-2 z M579.6,24.6 h2.8 v2.2 h-2.8 z M585.6,24.6 h2.8 v2.2 h-2.8 z M591.2,24.6 h2.4 v2.2 h-2.4 z" fill="#f0f0f0"/>
<g><clipPath id="oc585"><circle cx="585.4" cy="15.4" r="7.4"/></clipPath><g clip-path="url(#oc585)"><rect x="578.0" y="8.0" width="8.880000000000019" height="9.027999999999999" fill="#4c8ad8"/><rect x="586.88" y="8.0" width="5.919999999999959" height="9.027999999999999" fill="#dc4450"/><rect x="578.0" y="17.028" width="8.880000000000019" height="5.772000000000002" fill="#44a848"/><rect x="586.88" y="17.028" width="5.919999999999959" height="5.772000000000002" fill="#ecc050"/><circle cx="585.4" cy="15.4" r="7.4" fill="url(#gGloss)"/></g><circle cx="585.4" cy="15.4" r="7.4" fill="none" stroke="#586878" stroke-opacity="0.45" stroke-width="0.7"/></g>
<polygon points="602.5,16.5 608.5,16.5 605.5,20" fill="#8c8c8c"/>
<g><rect x="617.5" y="10.5" width="18" height="11" fill="#dfe4e8" stroke="#6c6c6c" stroke-width="1.2"/><rect x="625.5" y="21.5" width="2.2" height="3" fill="#5c5c5c"/><rect x="622" y="24.3" width="9" height="1.6" fill="#4c4c4c"/></g>
<polygon points="642.5,16.5 648.5,16.5 645.5,20" fill="#8c8c8c"/>
<rect x="924" y="57" width="26" height="192" fill="#d6d6d6"/>
<rect x="925" y="58" width="25" height="22" fill="#ffffff"/>
<path d="M924.5,57 V248.5 H950 M924.5,57.5 H950" fill="none" stroke="#8a8a8a" stroke-width="1"/>
<path d="M925,80.5 H950" stroke="#9a9a9a" stroke-width="1"/>
<path d="M925,104.5 H950" stroke="#9a9a9a" stroke-width="1"/>
<path d="M925,128.5 H950" stroke="#9a9a9a" stroke-width="1"/>
<path d="M925,152.5 H950" stroke="#9a9a9a" stroke-width="1"/>
<path d="M925,176.5 H950" stroke="#9a9a9a" stroke-width="1"/>
<path d="M925,200.5 H950" stroke="#9a9a9a" stroke-width="1"/>
<path d="M925,224.5 H950" stroke="#9a9a9a" stroke-width="1"/>
<g><path d="M930.8,68 V77.2 H943.4 V68" fill="#ffffff" stroke="#2c2c2c" stroke-width="1.5"/><rect x="935.6" y="70.6" width="3.8" height="6.4" fill="#f4e4e4" stroke="#4a2c2c" stroke-width="1"/><path d="M928.3,69.6 L937,60.8 L945.8,69.6" fill="none" stroke="#123c50" stroke-width="3.4" stroke-linejoin="miter"/><path d="M928.6,69.4 L937,61 L945.5,69.4" fill="none" stroke="#2a7c9c" stroke-width="1.8" stroke-linejoin="miter"/></g>
<g stroke="#3a3a3a" stroke-width="0.9" stroke-linejoin="round"><path d="M930.6,88.6 L933.9,85.4 L937.2,87.0 L937.2,99.0 L933.9,102.0 L930.6,100.2 Z" fill="#f6f6f6"/><path d="M930.6,88.6 L933.9,90.3 L937.2,87.0 M933.9,90.3 L933.9,102.0" fill="none"/><path d="M933.9,90.3 L937.2,87.0 L937.2,99.0 L933.9,102.0 Z" fill="#c8c8c8"/><path d="M934.5,87.6 L937.8,84.4 L941.1,86.0 L941.1,98.0 L937.8,101.0 L934.5,99.2 Z" fill="#f6f6f6"/><path d="M934.5,87.6 L937.8,89.3 L941.1,86.0 M937.8,89.3 L937.8,101.0" fill="none"/><path d="M937.8,89.3 L941.1,86.0 L941.1,98.0 L937.8,101.0 Z" fill="#c8c8c8"/><path d="M938.4,86.6 L941.7,83.4 L945.0,85.0 L945.0,97.0 L941.7,100.0 L938.4,98.2 Z" fill="#f6f6f6"/><path d="M938.4,86.6 L941.7,88.3 L945.0,85.0 M941.7,88.3 L941.7,100.0" fill="none"/><path d="M941.7,88.3 L945.0,85.0 L945.0,97.0 L941.7,100.0 Z" fill="#c8c8c8"/></g>
<g stroke="#4a4a4a" stroke-width="1"><path d="M927.5,124.5 V110 H933 L934.5,112 H943 V114.5" fill="#c8c8c8"/><path d="M927.5,124.5 L932,114.5 H946 L941.5,124.5 Z" fill="#f6f6f6"/></g>
<g><rect x="929" y="133.5" width="16.5" height="15" fill="#fdf8dc" stroke="#303030" stroke-width="1.2"/><rect x="931.5" y="136" width="6.5" height="2.4" fill="#f0c010"/><rect x="940" y="135.5" width="3" height="3" fill="#f0c010"/><path d="M931,146.5 v-2.5 h3 v-2.5 h3 v2.5 h3 v2.5 z" fill="#f0c010"/><rect x="941.5" y="141" width="2.6" height="6" fill="#b8c4c0" stroke="#555" stroke-width="0.5"/></g>
<g><clipPath id="oc937"><circle cx="937" cy="163.8" r="8"/></clipPath><g clip-path="url(#oc937)"><rect x="929" y="155.8" width="9.600000000000023" height="9.759999999999991" fill="#4c8ad8"/><rect x="938.6" y="155.8" width="6.399999999999977" height="9.759999999999991" fill="#dc4450"/><rect x="929" y="165.56" width="9.600000000000023" height="6.240000000000009" fill="#44a848"/><rect x="938.6" y="165.56" width="6.399999999999977" height="6.240000000000009" fill="#ecc050"/><circle cx="937" cy="163.8" r="8" fill="url(#gGloss)"/></g><circle cx="937" cy="163.8" r="8" fill="none" stroke="#586878" stroke-opacity="0.45" stroke-width="0.7"/></g>
<circle cx="937" cy="163.8" r="8" fill="none" stroke="#203040" stroke-opacity="0.35" stroke-width="0.8"/>
<g><rect x="928.8" y="180.5" width="16.6" height="16.5" fill="#ffffff" stroke="#1c3c58" stroke-width="1.2"/><rect x="929.4" y="181" width="15.4" height="2.8" fill="#5c9cc4"/><path d="M930.8,186.3 h3.4 M930.8,190 h3.4 M930.8,193.7 h3.4" stroke="#2c6088" stroke-width="1.8"/><path d="M936.5,186.3 h7 M936.5,190 h7 M936.5,193.7 h7" stroke="#303030" stroke-width="1"/></g>
<g><path d="M928.8,206.5 H940 V215.5 H933.5 L931,218.5 V215.5 H928.8 Z" fill="#5e9ec8" stroke="#244a68" stroke-width="1"/><path d="M936,211 H945.5 V218 H943.5 V221 L941,218 H936 Z" fill="#f6f2f2" stroke="#3c3c3c" stroke-width="1"/></g>
<g><circle cx="937" cy="236.5" r="9.6" fill="url(#gOrb)" stroke="#0e3048" stroke-width="0.8"/><path d="M935.5,234 L939.5,236.5 L935.5,239 Z" fill="none" stroke="#a8cce0" stroke-width="0.9"/><path d="M937,229.3 v1.2 M937,242.5 v1.4 M930,236.5 h1.4 M942.8,236.5 h1.4" stroke="#d8ecf8" stroke-width="1.2"/></g>
</svg>
</body>
</html>
